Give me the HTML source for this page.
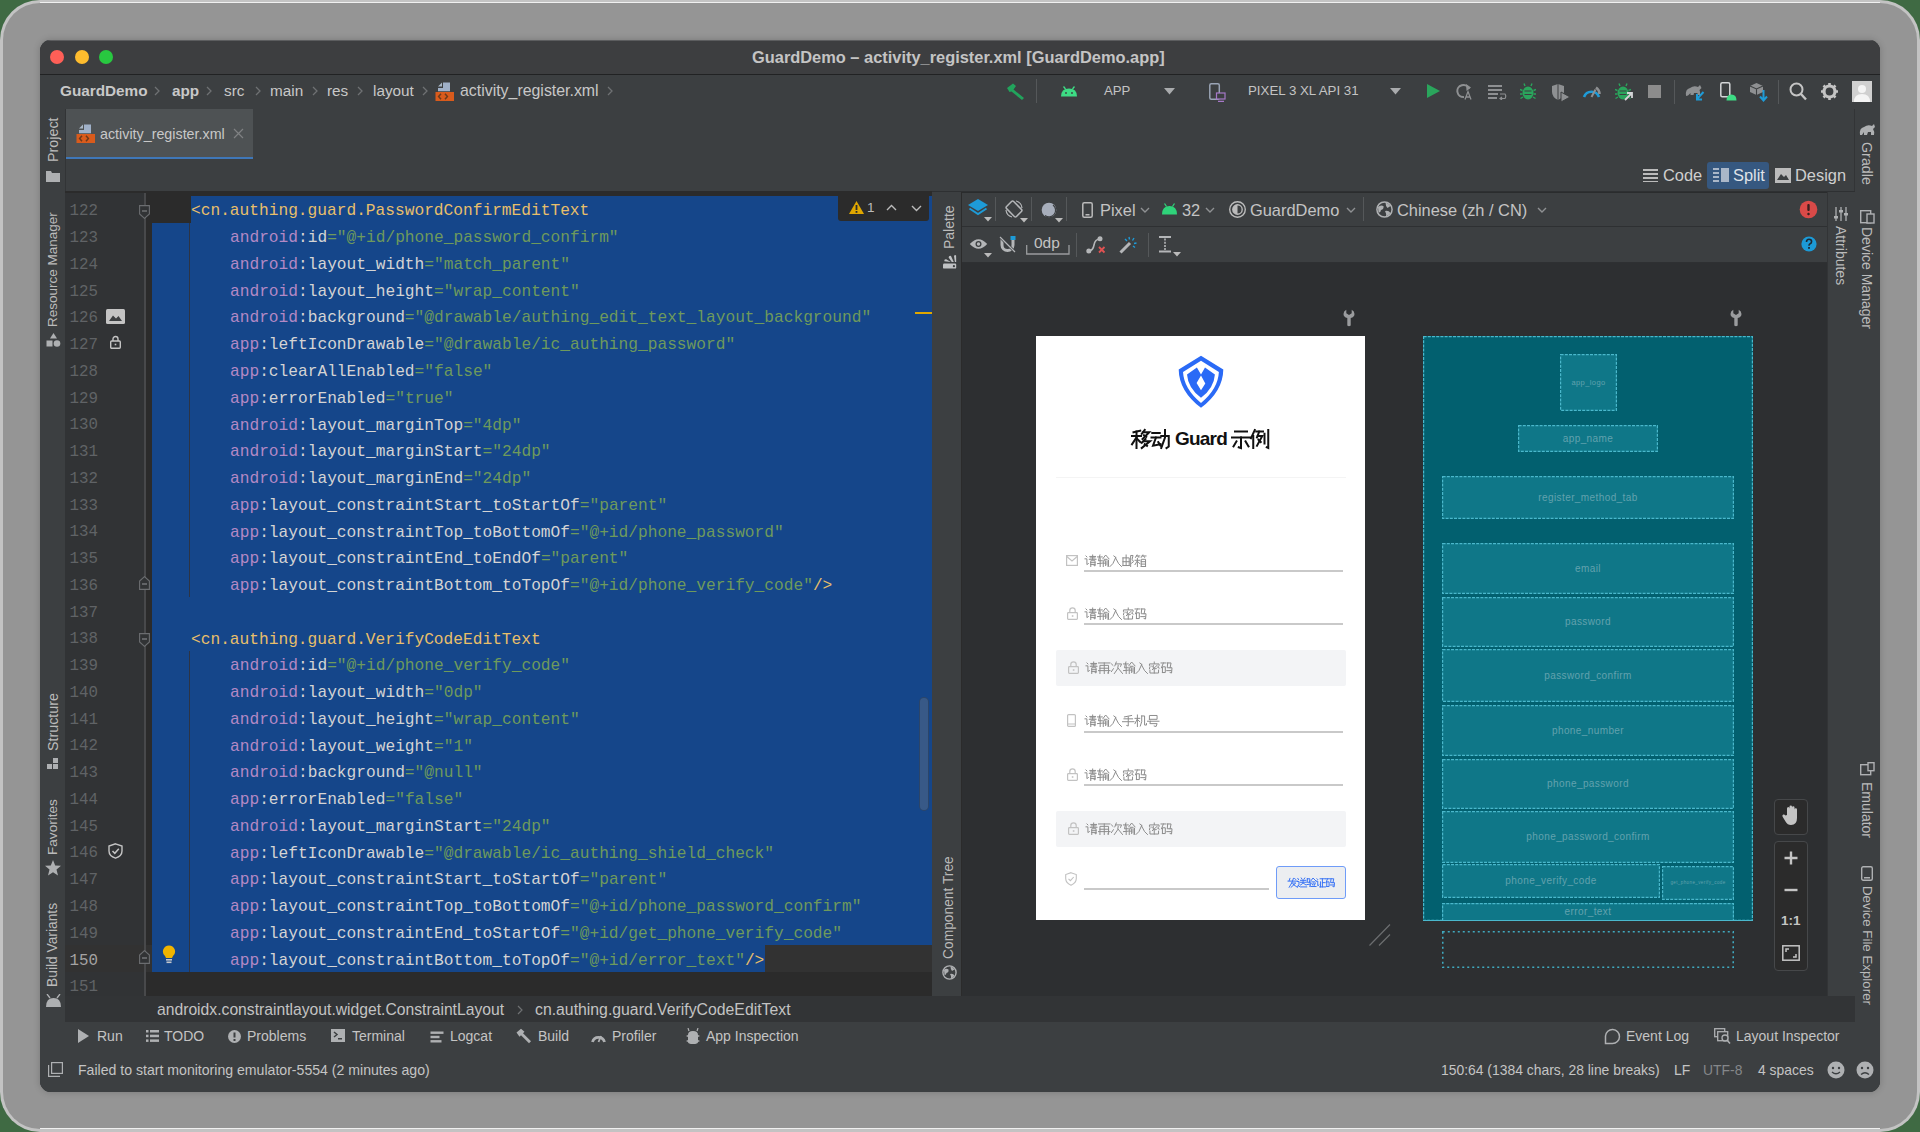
<!DOCTYPE html><html><head><meta charset="utf-8"><style>
*{box-sizing:border-box;margin:0;padding:0}
html,body{width:1920px;height:1132px;overflow:hidden}
body{background:#3f6a43;font-family:"Liberation Sans",sans-serif;position:relative}
.a{position:absolute}
.t{position:absolute;white-space:pre;line-height:0;height:0;font-family:"Liberation Sans",sans-serif}
.c{position:absolute;white-space:pre;line-height:0;height:0;font-family:"Liberation Mono",monospace;font-size:16.2px}
.vt{position:absolute;white-space:pre;line-height:0;height:0;transform-origin:0 0;transform:rotate(-90deg)}
.vt2{position:absolute;white-space:pre;line-height:0;height:0;transform-origin:0 0;transform:rotate(90deg)}
#clip{position:absolute;left:0;top:0;width:1920px;height:1132px;clip-path:inset(40px 40px 40px 40px round 11px)}
</style></head><body>
<div class="a" style="left:0px;top:0px;width:1920px;height:1132px;background:#c3c3c3;border-radius:40px"></div>
<div class="a" style="left:3px;top:3px;width:1914px;height:1126px;background:#959595;border-radius:37px"></div>
<div class="a" style="left:40px;top:2px;width:1840px;height:1px;background:#f0f0f0;"></div>
<div class="a" style="left:40px;top:1128px;width:1840px;height:1px;background:#f0f0f0;"></div>
<div class="a" style="left:40px;top:40px;width:1840px;height:1052px;background:#3c3f41;border-radius:11px;box-shadow:0 0 6px 1px rgba(0,0,0,0.15)"></div>
<div id="clip">
<div class="a" style="left:40px;top:40px;width:1840px;height:1052px;background:#3c3f41;"></div>
<div class="a" style="left:40px;top:40px;width:1840px;height:34px;background:#3d3e40;"></div>
<div class="a" style="left:40px;top:40px;width:1840px;height:1px;background:#5c5d5f;"></div>
<div class="a" style="left:40px;top:74px;width:1840px;height:1px;background:#212223;"></div>
<div class="a" style="left:50px;top:50px;width:14px;height:14px;background:#fe5f57;border-radius:50%"></div>
<div class="a" style="left:75px;top:50px;width:14px;height:14px;background:#febc2e;border-radius:50%"></div>
<div class="a" style="left:99px;top:50px;width:14px;height:14px;background:#28c840;border-radius:50%"></div>
<div class="t" style="left:752px;top:57px;font-size:16.4px;color:#c4c4c4;font-weight:bold">GuardDemo – activity_register.xml [GuardDemo.app]</div>
<div class="a" style="left:40px;top:75px;width:1840px;height:34px;background:#3c3f41;"></div>
<div class="t" style="left:60px;top:91px;font-size:15.3px;color:#c8c8c8;font-weight:bold">GuardDemo</div>
<div class="t" style="left:172px;top:91px;font-size:15.3px;color:#c8c8c8;font-weight:bold">app</div>
<div class="t" style="left:224px;top:91px;font-size:15.3px;color:#c8c8c8;">src</div>
<div class="t" style="left:270px;top:91px;font-size:15.3px;color:#c8c8c8;">main</div>
<div class="t" style="left:327px;top:91px;font-size:15.3px;color:#c8c8c8;">res</div>
<div class="t" style="left:373px;top:91px;font-size:15.3px;color:#c8c8c8;">layout</div>
<div class="t" style="left:460px;top:91px;font-size:15.9px;color:#c8c8c8;">activity_register.xml</div>
<svg class="a" style="left:154px;top:86px;" width="7" height="11" viewBox="0 0 7 11"><path d="M1 1 L5 5 L1 9" stroke="#6f7173" stroke-width="1.3" fill="none"/></svg>
<svg class="a" style="left:206px;top:86px;" width="7" height="11" viewBox="0 0 7 11"><path d="M1 1 L5 5 L1 9" stroke="#6f7173" stroke-width="1.3" fill="none"/></svg>
<svg class="a" style="left:255px;top:86px;" width="7" height="11" viewBox="0 0 7 11"><path d="M1 1 L5 5 L1 9" stroke="#6f7173" stroke-width="1.3" fill="none"/></svg>
<svg class="a" style="left:312px;top:86px;" width="7" height="11" viewBox="0 0 7 11"><path d="M1 1 L5 5 L1 9" stroke="#6f7173" stroke-width="1.3" fill="none"/></svg>
<svg class="a" style="left:357px;top:86px;" width="7" height="11" viewBox="0 0 7 11"><path d="M1 1 L5 5 L1 9" stroke="#6f7173" stroke-width="1.3" fill="none"/></svg>
<svg class="a" style="left:422px;top:86px;" width="7" height="11" viewBox="0 0 7 11"><path d="M1 1 L5 5 L1 9" stroke="#6f7173" stroke-width="1.3" fill="none"/></svg>
<svg class="a" style="left:607px;top:86px;" width="7" height="11" viewBox="0 0 7 11"><path d="M1 1 L5 5 L1 9" stroke="#6f7173" stroke-width="1.3" fill="none"/></svg>
<svg class="a" style="left:434px;top:81px;" width="22" height="21" viewBox="0 0 22 21"><path d="M4 5.5 L8 1.5 L8 5.5 Z" fill="#a9b7c6"/><path d="M9 1.5 L16 1.5 L16 10.3 L4 10.3 L4 7 L9 7 Z" fill="#9fb0c8"/><rect x="1.5" y="11" width="18.5" height="9" fill="#d95b1c"/><path d="M7 12.8 L4.6 15.5 L7 18.2 M11 12.8 L13.4 15.5 L11 18.2" stroke="#6b3a1c" stroke-width="1.5" fill="none"/></svg>
<div class="a" style="left:65px;top:109px;width:1790px;height:51px;background:#3c3f41;"></div>
<div class="a" style="left:66px;top:109px;width:187px;height:50px;background:#4e5254;"></div>
<div class="a" style="left:66px;top:157px;width:187px;height:2px;background:#3f77b8;"></div>
<svg class="a" style="left:75px;top:123px;" width="22" height="21" viewBox="0 0 22 21"><path d="M4 5.5 L8 1.5 L8 5.5 Z" fill="#a9b7c6"/><path d="M9 1.5 L16 1.5 L16 10.3 L4 10.3 L4 7 L9 7 Z" fill="#9fb0c8"/><rect x="1.5" y="11" width="18.5" height="9" fill="#d95b1c"/><path d="M7 12.8 L4.6 15.5 L7 18.2 M11 12.8 L13.4 15.5 L11 18.2" stroke="#6b3a1c" stroke-width="1.5" fill="none"/></svg>
<div class="t" style="left:100px;top:134px;font-size:14.3px;color:#c8c8c8;">activity_register.xml</div>
<svg class="a" style="left:233px;top:128px;" width="11" height="11" viewBox="0 0 11 11"><path d="M1 1 L10 10 M10 1 L1 10" stroke="#7f8183" stroke-width="1.2"/></svg>
<div class="a" style="left:65px;top:160px;width:1762px;height:31px;background:#3c3f41;"></div>
<div class="a" style="left:1707px;top:162px;width:62px;height:27px;background:#365880;border-radius:3px"></div>
<svg class="a" style="left:1643px;top:168px;" width="15" height="14" viewBox="0 0 15 14"><rect x="0" y="1" width="15" height="2" fill="#bbbbbb"/><rect x="0" y="5" width="15" height="2" fill="#bbbbbb"/><rect x="0" y="9" width="15" height="2" fill="#bbbbbb"/><rect x="0" y="13" width="15" height="1.5" fill="#bbbbbb"/></svg>
<div class="t" style="left:1663px;top:175px;font-size:16.4px;color:#cfcfcf;">Code</div>
<svg class="a" style="left:1713px;top:168px;" width="16" height="14" viewBox="0 0 16 14"><rect x="0" y="0" width="6" height="2" fill="#aab7c8"/><rect x="0" y="4" width="6" height="2" fill="#aab7c8"/><rect x="0" y="8" width="6" height="2" fill="#aab7c8"/><rect x="0" y="12" width="6" height="2" fill="#aab7c8"/><rect x="8" y="0" width="8" height="14" fill="#aab7c8"/></svg>
<div class="t" style="left:1733px;top:175px;font-size:16.4px;color:#dfe3e8;">Split</div>
<svg class="a" style="left:1775px;top:168px;" width="16" height="15" viewBox="0 0 16 15"><rect x="0" y="0" width="16" height="15" fill="#bbbbbb"/><path d="M2 12 L6 6 L9 9 L11 7 L14 12 Z" fill="#3c3f41"/></svg>
<div class="t" style="left:1795px;top:175px;font-size:16.4px;color:#cfcfcf;">Design</div>
<div class="a" style="left:40px;top:109px;width:25px;height:913px;background:#3c3f41;"></div>
<div class="a" style="left:65px;top:109px;width:1px;height:887px;background:#323436;"></div>
<div class="vt" style="left:53px;top:162px;font-size:14.3px;color:#bbbbbb">Project</div>
<svg class="a" style="left:46px;top:170px;" width="14" height="12" viewBox="0 0 14 12"><path d="M0 1 L5 1 L6 3 L14 3 L14 12 L0 12 Z" fill="#aeb0b2"/></svg>
<div class="vt" style="left:53px;top:327px;font-size:13.5px;color:#bbbbbb">Resource Manager</div>
<svg class="a" style="left:46px;top:333px;" width="15" height="15" viewBox="0 0 15 15"><path d="M7.5 0 L11 5.5 L4 5.5 Z" fill="#aeb0b2"/><rect x="0.5" y="7.5" width="6" height="6" fill="#aeb0b2"/><circle cx="11" cy="10.5" r="3.3" fill="#aeb0b2"/></svg>
<div class="vt" style="left:53px;top:751px;font-size:14.3px;color:#bbbbbb">Structure</div>
<svg class="a" style="left:47px;top:758px;" width="12" height="12" viewBox="0 0 12 12"><rect x="0" y="6" width="5" height="5" fill="#aeb0b2"/><rect x="6" y="6" width="5" height="5" fill="#aeb0b2"/><rect x="6" y="0" width="5" height="5" fill="#aeb0b2"/></svg>
<div class="vt" style="left:53px;top:855px;font-size:13.6px;color:#bbbbbb">Favorites</div>
<svg class="a" style="left:45px;top:860px;" width="16" height="16" viewBox="0 0 16 16"><path d="M8 0 L10.2 5.4 L16 5.8 L11.5 9.5 L13 15.5 L8 12.3 L3 15.5 L4.5 9.5 L0 5.8 L5.8 5.4 Z" fill="#aeb0b2"/></svg>
<div class="vt" style="left:53px;top:987px;font-size:13.8px;color:#bbbbbb">Build Variants</div>
<svg class="a" style="left:46px;top:994px;" width="15" height="13" viewBox="0 0 15 13"><path d="M1 0 L4 4 M14 0 L11 4" stroke="#aeb0b2" stroke-width="1.3"/><path d="M0 13 Q0 4 7.5 4 Q15 4 15 13 Z" fill="#aeb0b2"/></svg>
<div class="a" style="left:1855px;top:109px;width:25px;height:913px;background:#3c3f41;"></div>
<div class="a" style="left:1854px;top:109px;width:1px;height:913px;background:#323436;"></div>
<svg class="a" style="left:1859px;top:123px;" width="17" height="13" viewBox="0 0 17 13"><path d="M1 12 Q0 5 5 4 Q9 1 13 3 L15 1 L16 4 L14 6 Q16 9 15 12 L12 12 L12 9 L9 9 L8 12 L5 12 L5 9 L3 12 Z" fill="#aeb0b2"/></svg>
<div class="vt2" style="left:1867px;top:142px;font-size:14.3px;color:#bbbbbb">Gradle</div>
<svg class="a" style="left:1860px;top:210px;" width="15" height="14" viewBox="0 0 15 14"><rect x="0.7" y="0.7" width="10" height="12" fill="none" stroke="#aeb0b2" stroke-width="1.4"/><rect x="7" y="4" width="7" height="9" fill="#3c3f41" stroke="#aeb0b2" stroke-width="1.4"/></svg>
<div class="vt2" style="left:1867px;top:227px;font-size:14.0px;color:#bbbbbb">Device Manager</div>
<svg class="a" style="left:1860px;top:762px;" width="15" height="14" viewBox="0 0 15 14"><rect x="0.7" y="2.7" width="10" height="10" fill="none" stroke="#aeb0b2" stroke-width="1.4"/><rect x="8" y="0.7" width="6" height="8" fill="#3c3f41" stroke="#aeb0b2" stroke-width="1.4"/></svg>
<div class="vt2" style="left:1867px;top:782px;font-size:14.0px;color:#bbbbbb">Emulator</div>
<svg class="a" style="left:1861px;top:866px;" width="12" height="15" viewBox="0 0 12 15"><rect x="0.7" y="0.7" width="10.6" height="13.6" rx="1.5" fill="none" stroke="#aeb0b2" stroke-width="1.4"/><rect x="3" y="11" width="6" height="1.5" fill="#aeb0b2"/></svg>
<div class="vt2" style="left:1867px;top:886px;font-size:13.3px;color:#bbbbbb">Device File Explorer</div>
<div class="a" style="left:932px;top:192px;width:30px;height:804px;background:#3c3f41;"></div>
<div class="vt" style="left:949px;top:249px;font-size:14.0px;color:#bbbbbb">Palette</div>
<svg class="a" style="left:936px;top:248px;" width="26" height="26" viewBox="0 0 26 26"><rect x="7" y="15.6" width="13.2" height="5" rx="1.2" fill="#c0c2c4"/><circle cx="17.9" cy="18.2" r="1.1" fill="#3c3f41"/><path d="M8.3 13.3 Q8 10.8 10.2 11.2 L14.8 14 Z M12.6 9.6 Q12.8 7.3 15 7.9 L17.8 14 L15.8 14 Z M18 8 Q18.8 6.6 20.1 7.4 L20.2 14 L18.9 14 Z" fill="#c0c2c4"/></svg>
<div class="vt" style="left:949px;top:959px;font-size:13.8px;color:#bbbbbb">Component Tree</div>
<svg class="a" style="left:942px;top:965px;" width="15" height="15" viewBox="0 0 15 15"><circle cx="7.5" cy="7.5" r="6.6" fill="none" stroke="#aeb0b2" stroke-width="1.4"/><path d="M2 5 Q4 3 6.5 4.5 Q7 7.5 4.5 8 Q4 10.5 2.5 10 Z M8.5 1.5 Q11 2 12.5 4.5 L10 6 Q8.5 4 8.5 1.5 Z M8 9 Q11 8 12.5 10.5 Q11 13 9 13.2 Q9.5 11 8 9 Z" fill="#aeb0b2"/></svg>
<div class="a" style="left:1827px;top:192px;width:28px;height:804px;background:#3c3f41;"></div>
<div class="a" style="left:932px;top:191px;width:923px;height:1px;background:#2e3032;"></div>
<div class="a" style="left:1827px;top:192px;width:1px;height:804px;background:#323436;"></div>
<svg class="a" style="left:1834px;top:207px;" width="14" height="14" viewBox="0 0 14 14"><path d="M2 0 L2 14 M7 0 L7 14 M12 0 L12 14" stroke="#aeb0b2" stroke-width="1.3"/><rect x="0" y="9" width="4" height="2.5" fill="#aeb0b2"/><rect x="5" y="3" width="4" height="2.5" fill="#aeb0b2"/><rect x="10" y="6" width="4" height="2.5" fill="#aeb0b2"/></svg>
<div class="vt2" style="left:1841px;top:226px;font-size:14.0px;color:#bbbbbb">Attributes</div>
<div class="a" style="left:65px;top:996px;width:1790px;height:27px;background:#323436;"></div>
<div class="t" style="left:157px;top:1010px;font-size:15.7px;color:#c3c3c3;">androidx.constraintlayout.widget.ConstraintLayout</div>
<svg class="a" style="left:517px;top:1005px;" width="6" height="10" viewBox="0 0 6 10"><path d="M1 1 L5 5 L1 9" stroke="#6f7173" stroke-width="1.2" fill="none"/></svg>
<div class="t" style="left:535px;top:1010px;font-size:15.8px;color:#c3c3c3;">cn.authing.guard.VerifyCodeEditText</div>
<div class="a" style="left:40px;top:1022px;width:1840px;height:28px;background:#3c3f41;"></div>
<div class="t" style="left:97px;top:1036px;font-size:14.0px;color:#c4c4c4;">Run</div>
<div class="t" style="left:164px;top:1036px;font-size:14.0px;color:#c4c4c4;">TODO</div>
<div class="t" style="left:247px;top:1036px;font-size:14.0px;color:#c4c4c4;">Problems</div>
<div class="t" style="left:352px;top:1036px;font-size:14.0px;color:#c4c4c4;">Terminal</div>
<div class="t" style="left:450px;top:1036px;font-size:14.0px;color:#c4c4c4;">Logcat</div>
<div class="t" style="left:538px;top:1036px;font-size:14.0px;color:#c4c4c4;">Build</div>
<div class="t" style="left:612px;top:1036px;font-size:14.0px;color:#c4c4c4;">Profiler</div>
<div class="t" style="left:706px;top:1036px;font-size:14.0px;color:#c4c4c4;">App Inspection</div>
<div class="t" style="left:1626px;top:1036px;font-size:14.0px;color:#c4c4c4;">Event Log</div>
<div class="t" style="left:1736px;top:1036px;font-size:14.0px;color:#c4c4c4;">Layout Inspector</div>
<svg class="a" style="left:78px;top:1029px;" width="11" height="14" viewBox="0 0 11 14"><path d="M0 0 L11 7 L0 14 Z" fill="#aeb0b2"/></svg>
<svg class="a" style="left:146px;top:1030px;" width="13" height="12" viewBox="0 0 13 12"><rect x="0" y="0" width="2.5" height="2.5" fill="#aeb0b2"/><rect x="4" y="0" width="9" height="2.5" fill="#aeb0b2"/><rect x="0" y="4.7" width="2.5" height="2.5" fill="#aeb0b2"/><rect x="4" y="4.7" width="9" height="2.5" fill="#aeb0b2"/><rect x="0" y="9.4" width="2.5" height="2.5" fill="#aeb0b2"/><rect x="4" y="9.4" width="9" height="2.5" fill="#aeb0b2"/></svg>
<svg class="a" style="left:228px;top:1030px;" width="13" height="13" viewBox="0 0 13 13"><circle cx="6.5" cy="6.5" r="6.5" fill="#aeb0b2"/><rect x="5.5" y="2.5" width="2" height="5" fill="#3c3f41"/><rect x="5.5" y="9" width="2" height="2" fill="#3c3f41"/></svg>
<svg class="a" style="left:331px;top:1029px;" width="14" height="13" viewBox="0 0 14 13"><rect x="0" y="0" width="14" height="13" fill="#aeb0b2"/><path d="M3 3 L6 5.5 L3 8" stroke="#3c3f41" stroke-width="1.5" fill="none"/><rect x="7" y="9" width="4" height="1.5" fill="#3c3f41"/></svg>
<svg class="a" style="left:430px;top:1031px;" width="14" height="12" viewBox="0 0 14 12"><rect x="0.5" y="0.5" width="13" height="2.4" fill="#aeb0b2"/><rect x="0.5" y="4.8" width="9" height="2.4" fill="#aeb0b2"/><rect x="0.5" y="9.1" width="11" height="2.4" fill="#aeb0b2"/></svg>
<svg class="a" style="left:516px;top:1028px;" width="16" height="16" viewBox="0 0 16 16"><path d="M0.5 4.5 L5 0.8 L8.5 3.8 L7 5.3 L15 13.3 L13 15.3 L5 7.3 L3.5 8.8 Z" fill="#aeb0b2"/></svg>
<svg class="a" style="left:591px;top:1030px;" width="15" height="13" viewBox="0 0 15 13"><path d="M1.5 12 A6.2 6.2 0 0 1 13.5 12" stroke="#aeb0b2" stroke-width="2.8" fill="none"/><path d="M7.5 12 L10 6" stroke="#aeb0b2" stroke-width="1.8"/></svg>
<svg class="a" style="left:686px;top:1028px;" width="14" height="16" viewBox="0 0 14 16"><path d="M3 3 L2 0 M11 3 L12 0" stroke="#aeb0b2" stroke-width="1.2"/><path d="M2 7 Q2 3 7 3 Q12 3 12 7 L14 8 L12 9 L12 12 L14 13 L12 14 Q12 16 7 16 Q2 16 2 14 L0 13 L2 12 L2 9 L0 8 L2 7 Z" fill="#aeb0b2"/></svg>
<svg class="a" style="left:1604px;top:1028px;" width="17" height="17" viewBox="0 0 17 17"><path d="M1.5 15.5 L1.5 8 A7 7 0 1 1 8.5 15.5 Z" stroke="#aeb0b2" stroke-width="1.5" fill="none"/></svg>
<svg class="a" style="left:1714px;top:1028px;" width="17" height="17" viewBox="0 0 17 17"><rect x="0.7" y="0.7" width="10" height="8" fill="none" stroke="#aeb0b2" stroke-width="1.3"/><rect x="3.7" y="3.7" width="10" height="9" fill="#3c3f41" stroke="#aeb0b2" stroke-width="1.3"/><circle cx="11" cy="10" r="3" fill="#3c3f41" stroke="#aeb0b2" stroke-width="1.3"/><path d="M13 12 L16 15.5" stroke="#aeb0b2" stroke-width="1.5"/></svg>
<div class="a" style="left:40px;top:1050px;width:1840px;height:42px;background:#3c3f41;"></div>
<svg class="a" style="left:48px;top:1062px;" width="15" height="15" viewBox="0 0 15 15"><rect x="3.6" y="0.6" width="10.8" height="10.8" fill="none" stroke="#aeb0b2" stroke-width="1.2"/><path d="M0.6 3 L0.6 14.4 L12 14.4" stroke="#aeb0b2" stroke-width="1.2" fill="none"/></svg>
<div class="t" style="left:78px;top:1070px;font-size:14.1px;color:#c4c4c4;">Failed to start monitoring emulator-5554 (2 minutes ago)</div>
<div class="t" style="left:1441px;top:1070px;font-size:13.9px;color:#c4c4c4;">150:64 (1384 chars, 28 line breaks)</div>
<div class="t" style="left:1674px;top:1070px;font-size:13.9px;color:#c4c4c4;">LF</div>
<div class="t" style="left:1703px;top:1070px;font-size:13.9px;color:#85878a;">UTF-8</div>
<div class="t" style="left:1758px;top:1070px;font-size:13.9px;color:#c4c4c4;">4 spaces</div>
<svg class="a" style="left:1827px;top:1061px;" width="18" height="18" viewBox="0 0 18 18"><circle cx="9" cy="9" r="8.5" fill="#aeb0b2"/><circle cx="6" cy="7" r="1.2" fill="#3c3f41"/><circle cx="12" cy="7" r="1.2" fill="#3c3f41"/><path d="M5 11 Q9 14.5 13 11" stroke="#3c3f41" stroke-width="1.4" fill="none"/></svg>
<svg class="a" style="left:1856px;top:1061px;" width="18" height="18" viewBox="0 0 18 18"><circle cx="9" cy="9" r="8.5" fill="#aeb0b2"/><circle cx="6" cy="7" r="1.2" fill="#3c3f41"/><circle cx="12" cy="7" r="1.2" fill="#3c3f41"/><path d="M5 13.5 Q9 10 13 13.5" stroke="#3c3f41" stroke-width="1.4" fill="none"/></svg>
<div class="a" style="left:65px;top:191px;width:867px;height:2px;background:#2b2b2b;"></div>
<div class="a" style="left:65px;top:193px;width:80px;height:803px;background:#313335;"></div>
<div class="a" style="left:145px;top:193px;width:787px;height:803px;background:#2b2b2b;"></div>
<div class="a" style="left:65px;top:945.2800000000001px;width:867px;height:26.76px;background:#323232;"></div>
<div class="a" style="left:191px;top:196.0px;width:741px;height:27.26px;background:#15468a;"></div>
<div class="a" style="left:152px;top:222.76px;width:780px;height:722.5200000000001px;background:#15468a;"></div>
<div class="a" style="left:152px;top:945.2800000000001px;width:613px;height:26.76px;background:#15468a;"></div>
<div class="a" style="left:189px;top:222.76px;width:1px;height:374.6400000000001px;background:#2d3444;"></div>
<div class="a" style="left:189px;top:650.9200000000001px;width:1px;height:321.12px;background:#2d3444;"></div>
<div class="a" style="left:144px;top:193px;width:2px;height:803px;background:#48494b;"></div>
<svg class="a" style="left:139px;top:204.5px;" width="11" height="14" viewBox="0 0 11 14"><path d="M0.6 0.6 L10.4 0.6 L10.4 9 L5.5 13.4 L0.6 9 Z" fill="#313335" stroke="#6b6d70" stroke-width="1.1"/><path d="M3 6 L8 6" stroke="#8b8d90" stroke-width="1.1"/></svg>
<svg class="a" style="left:139px;top:575.6400000000001px;" width="11" height="14" viewBox="0 0 11 14"><path d="M0.6 13.4 L10.4 13.4 L10.4 5 L5.5 0.6 L0.6 5 Z" fill="#313335" stroke="#6b6d70" stroke-width="1.1"/><path d="M3 8 L8 8" stroke="#8b8d90" stroke-width="1.1"/></svg>
<svg class="a" style="left:139px;top:632.6600000000001px;" width="11" height="14" viewBox="0 0 11 14"><path d="M0.6 0.6 L10.4 0.6 L10.4 9 L5.5 13.4 L0.6 9 Z" fill="#313335" stroke="#6b6d70" stroke-width="1.1"/><path d="M3 6 L8 6" stroke="#8b8d90" stroke-width="1.1"/></svg>
<svg class="a" style="left:139px;top:950.2800000000001px;" width="11" height="14" viewBox="0 0 11 14"><path d="M0.6 13.4 L10.4 13.4 L10.4 5 L5.5 0.6 L0.6 5 Z" fill="#313335" stroke="#6b6d70" stroke-width="1.1"/><path d="M3 8 L8 8" stroke="#8b8d90" stroke-width="1.1"/></svg>
<div class="c" style="left:68px;top:211.2px;width:30px;text-align:right;color:#606366;font-size:15.8px">122</div>
<div class="c" style="left:68px;top:237.9px;width:30px;text-align:right;color:#606366;font-size:15.8px">123</div>
<div class="c" style="left:68px;top:264.7px;width:30px;text-align:right;color:#606366;font-size:15.8px">124</div>
<div class="c" style="left:68px;top:291.5px;width:30px;text-align:right;color:#606366;font-size:15.8px">125</div>
<div class="c" style="left:68px;top:318.2px;width:30px;text-align:right;color:#606366;font-size:15.8px">126</div>
<div class="c" style="left:68px;top:345.0px;width:30px;text-align:right;color:#606366;font-size:15.8px">127</div>
<div class="c" style="left:68px;top:371.7px;width:30px;text-align:right;color:#606366;font-size:15.8px">128</div>
<div class="c" style="left:68px;top:398.5px;width:30px;text-align:right;color:#606366;font-size:15.8px">129</div>
<div class="c" style="left:68px;top:425.3px;width:30px;text-align:right;color:#606366;font-size:15.8px">130</div>
<div class="c" style="left:68px;top:452.0px;width:30px;text-align:right;color:#606366;font-size:15.8px">131</div>
<div class="c" style="left:68px;top:478.8px;width:30px;text-align:right;color:#606366;font-size:15.8px">132</div>
<div class="c" style="left:68px;top:505.5px;width:30px;text-align:right;color:#606366;font-size:15.8px">133</div>
<div class="c" style="left:68px;top:532.3px;width:30px;text-align:right;color:#606366;font-size:15.8px">134</div>
<div class="c" style="left:68px;top:559.1px;width:30px;text-align:right;color:#606366;font-size:15.8px">135</div>
<div class="c" style="left:68px;top:585.8px;width:30px;text-align:right;color:#606366;font-size:15.8px">136</div>
<div class="c" style="left:68px;top:612.6px;width:30px;text-align:right;color:#606366;font-size:15.8px">137</div>
<div class="c" style="left:68px;top:639.3px;width:30px;text-align:right;color:#606366;font-size:15.8px">138</div>
<div class="c" style="left:68px;top:666.1px;width:30px;text-align:right;color:#606366;font-size:15.8px">139</div>
<div class="c" style="left:68px;top:692.9px;width:30px;text-align:right;color:#606366;font-size:15.8px">140</div>
<div class="c" style="left:68px;top:719.6px;width:30px;text-align:right;color:#606366;font-size:15.8px">141</div>
<div class="c" style="left:68px;top:746.4px;width:30px;text-align:right;color:#606366;font-size:15.8px">142</div>
<div class="c" style="left:68px;top:773.1px;width:30px;text-align:right;color:#606366;font-size:15.8px">143</div>
<div class="c" style="left:68px;top:799.9px;width:30px;text-align:right;color:#606366;font-size:15.8px">144</div>
<div class="c" style="left:68px;top:826.7px;width:30px;text-align:right;color:#606366;font-size:15.8px">145</div>
<div class="c" style="left:68px;top:853.4px;width:30px;text-align:right;color:#606366;font-size:15.8px">146</div>
<div class="c" style="left:68px;top:880.2px;width:30px;text-align:right;color:#606366;font-size:15.8px">147</div>
<div class="c" style="left:68px;top:906.9px;width:30px;text-align:right;color:#606366;font-size:15.8px">148</div>
<div class="c" style="left:68px;top:933.7px;width:30px;text-align:right;color:#606366;font-size:15.8px">149</div>
<div class="c" style="left:68px;top:960.5px;width:30px;text-align:right;color:#a4a3a3;font-size:15.8px">150</div>
<div class="c" style="left:68px;top:987.2px;width:30px;text-align:right;color:#606366;font-size:15.8px">151</div>
<div class="c" style="left:191px;top:211.4px"><span style="color:#e8bf6a">&lt;cn.authing.guard.PasswordConfirmEditText</span></div>
<div class="c" style="left:230px;top:238.1px"><span style="color:#b389c5">android</span><span style="color:#d4d4d4">:id</span><span style="color:#6e9a5c">="@+id/phone_password_confirm"</span></div>
<div class="c" style="left:230px;top:264.9px"><span style="color:#b389c5">android</span><span style="color:#d4d4d4">:layout_width</span><span style="color:#6e9a5c">="match_parent"</span></div>
<div class="c" style="left:230px;top:291.7px"><span style="color:#b389c5">android</span><span style="color:#d4d4d4">:layout_height</span><span style="color:#6e9a5c">="wrap_content"</span></div>
<div class="c" style="left:230px;top:318.4px"><span style="color:#b389c5">android</span><span style="color:#d4d4d4">:background</span><span style="color:#6e9a5c">="@drawable/authing_edit_text_layout_background"</span></div>
<div class="c" style="left:230px;top:345.2px"><span style="color:#b389c5">app</span><span style="color:#d4d4d4">:leftIconDrawable</span><span style="color:#6e9a5c">="@drawable/ic_authing_password"</span></div>
<div class="c" style="left:230px;top:371.9px"><span style="color:#b389c5">app</span><span style="color:#d4d4d4">:clearAllEnabled</span><span style="color:#6e9a5c">="false"</span></div>
<div class="c" style="left:230px;top:398.7px"><span style="color:#b389c5">app</span><span style="color:#d4d4d4">:errorEnabled</span><span style="color:#6e9a5c">="true"</span></div>
<div class="c" style="left:230px;top:425.5px"><span style="color:#b389c5">android</span><span style="color:#d4d4d4">:layout_marginTop</span><span style="color:#6e9a5c">="4dp"</span></div>
<div class="c" style="left:230px;top:452.2px"><span style="color:#b389c5">android</span><span style="color:#d4d4d4">:layout_marginStart</span><span style="color:#6e9a5c">="24dp"</span></div>
<div class="c" style="left:230px;top:479.0px"><span style="color:#b389c5">android</span><span style="color:#d4d4d4">:layout_marginEnd</span><span style="color:#6e9a5c">="24dp"</span></div>
<div class="c" style="left:230px;top:505.7px"><span style="color:#b389c5">app</span><span style="color:#d4d4d4">:layout_constraintStart_toStartOf</span><span style="color:#6e9a5c">="parent"</span></div>
<div class="c" style="left:230px;top:532.5px"><span style="color:#b389c5">app</span><span style="color:#d4d4d4">:layout_constraintTop_toBottomOf</span><span style="color:#6e9a5c">="@+id/phone_password"</span></div>
<div class="c" style="left:230px;top:559.3px"><span style="color:#b389c5">app</span><span style="color:#d4d4d4">:layout_constraintEnd_toEndOf</span><span style="color:#6e9a5c">="parent"</span></div>
<div class="c" style="left:230px;top:586.0px"><span style="color:#b389c5">app</span><span style="color:#d4d4d4">:layout_constraintBottom_toTopOf</span><span style="color:#6e9a5c">="@+id/phone_verify_code"</span><span style="color:#e8bf6a">/&gt;</span></div>
<div class="c" style="left:191px;top:639.5px"><span style="color:#e8bf6a">&lt;cn.authing.guard.VerifyCodeEditText</span></div>
<div class="c" style="left:230px;top:666.3px"><span style="color:#b389c5">android</span><span style="color:#d4d4d4">:id</span><span style="color:#6e9a5c">="@+id/phone_verify_code"</span></div>
<div class="c" style="left:230px;top:693.1px"><span style="color:#b389c5">android</span><span style="color:#d4d4d4">:layout_width</span><span style="color:#6e9a5c">="0dp"</span></div>
<div class="c" style="left:230px;top:719.8px"><span style="color:#b389c5">android</span><span style="color:#d4d4d4">:layout_height</span><span style="color:#6e9a5c">="wrap_content"</span></div>
<div class="c" style="left:230px;top:746.6px"><span style="color:#b389c5">android</span><span style="color:#d4d4d4">:layout_weight</span><span style="color:#6e9a5c">="1"</span></div>
<div class="c" style="left:230px;top:773.3px"><span style="color:#b389c5">android</span><span style="color:#d4d4d4">:background</span><span style="color:#6e9a5c">="@null"</span></div>
<div class="c" style="left:230px;top:800.1px"><span style="color:#b389c5">app</span><span style="color:#d4d4d4">:errorEnabled</span><span style="color:#6e9a5c">="false"</span></div>
<div class="c" style="left:230px;top:826.9px"><span style="color:#b389c5">android</span><span style="color:#d4d4d4">:layout_marginStart</span><span style="color:#6e9a5c">="24dp"</span></div>
<div class="c" style="left:230px;top:853.6px"><span style="color:#b389c5">app</span><span style="color:#d4d4d4">:leftIconDrawable</span><span style="color:#6e9a5c">="@drawable/ic_authing_shield_check"</span></div>
<div class="c" style="left:230px;top:880.4px"><span style="color:#b389c5">app</span><span style="color:#d4d4d4">:layout_constraintStart_toStartOf</span><span style="color:#6e9a5c">="parent"</span></div>
<div class="c" style="left:230px;top:907.1px"><span style="color:#b389c5">app</span><span style="color:#d4d4d4">:layout_constraintTop_toBottomOf</span><span style="color:#6e9a5c">="@+id/phone_password_confirm"</span></div>
<div class="c" style="left:230px;top:933.9px"><span style="color:#b389c5">app</span><span style="color:#d4d4d4">:layout_constraintEnd_toStartOf</span><span style="color:#6e9a5c">="@+id/get_phone_verify_code"</span></div>
<div class="c" style="left:230px;top:960.7px"><span style="color:#b389c5">app</span><span style="color:#d4d4d4">:layout_constraintBottom_toTopOf</span><span style="color:#6e9a5c">="@+id/error_text"</span><span style="color:#e8bf6a">/&gt;</span></div>
<svg class="a" style="left:106px;top:309px;" width="19" height="15" viewBox="0 0 19 15"><rect x="0" y="0" width="19" height="15" rx="1.5" fill="#c4c4c4"/><path d="M3 12 L7 6.5 L10 9.5 L12.5 7 L16 12 Z" fill="#3c3f41"/></svg>
<svg class="a" style="left:110px;top:335px;" width="11" height="14" viewBox="0 0 11 14"><path d="M3 6 L3 4 A2.5 2.5 0 0 1 8 4 L8 6" stroke="#c4c4c4" stroke-width="1.4" fill="none"/><rect x="0.7" y="6" width="9.6" height="7.3" rx="1" fill="none" stroke="#c4c4c4" stroke-width="1.4"/><rect x="4.7" y="8.7" width="1.6" height="1.6" fill="#c4c4c4"/></svg>
<svg class="a" style="left:108px;top:843px;" width="15" height="16" viewBox="0 0 15 16"><path d="M7.5 0.8 L14 3 L14 8 Q14 13 7.5 15.2 Q1 13 1 8 L1 3 Z" fill="none" stroke="#c4c4c4" stroke-width="1.4"/><path d="M4.5 8 L6.8 10.3 L10.8 5.8" stroke="#c4c4c4" stroke-width="1.5" fill="none"/></svg>
<svg class="a" style="left:162px;top:945px;" width="14" height="19" viewBox="0 0 14 19"><path d="M7 0.5 A6 6 0 0 1 11 11 L10 13 L4 13 L3 11 A6 6 0 0 1 7 0.5 Z" fill="#f0b400"/><rect x="4" y="14" width="6" height="1.6" fill="#c3c6cb"/><rect x="4.5" y="16.5" width="5" height="1.6" fill="#c3c6cb"/></svg>
<div class="a" style="left:838px;top:196px;width:91px;height:25px;background:#2b2b2b;border-radius:0 0 3px 3px"></div>
<svg class="a" style="left:849px;top:201px;" width="15" height="13" viewBox="0 0 15 13"><path d="M7.5 0 L15 13 L0 13 Z" fill="#e0a700"/><rect x="6.6" y="4" width="1.8" height="5" fill="#2b2b2b"/><rect x="6.6" y="10" width="1.8" height="1.8" fill="#2b2b2b"/></svg>
<div class="t" style="left:867px;top:208px;font-size:13.5px;color:#bbbbbb;">1</div>
<svg class="a" style="left:886px;top:204px;" width="11" height="7" viewBox="0 0 11 7"><path d="M1 6 L5.5 1.5 L10 6" stroke="#bbbbbb" stroke-width="1.4" fill="none"/></svg>
<svg class="a" style="left:911px;top:205px;" width="11" height="7" viewBox="0 0 11 7"><path d="M1 1 L5.5 5.5 L10 1" stroke="#bbbbbb" stroke-width="1.4" fill="none"/></svg>
<div class="a" style="left:915px;top:312px;width:17px;height:2px;background:#e0a700;"></div>
<div class="a" style="left:919px;top:697px;width:10px;height:114px;background:rgba(130,130,130,0.32);border:1px solid rgba(0,0,0,0.22);border-radius:5px"></div>
<div class="a" style="left:962px;top:192px;width:865px;height:804px;background:#2d2f31;"></div>
<div class="a" style="left:961px;top:192px;width:1px;height:804px;background:#2b2b2b;"></div>
<div class="a" style="left:962px;top:192px;width:865px;height:1px;background:#2a2c2d;"></div>
<div class="a" style="left:962px;top:193px;width:865px;height:33px;background:#3c3f41;"></div>
<div class="a" style="left:962px;top:226px;width:865px;height:1px;background:#2e3032;"></div>
<div class="a" style="left:962px;top:227px;width:865px;height:35px;background:#3c3f41;"></div>
<div class="a" style="left:962px;top:262px;width:865px;height:1px;background:#2e3032;"></div>
<svg class="a" style="left:1799px;top:200px;" width="19" height="19" viewBox="0 0 19 19"><circle cx="9.5" cy="9.5" r="8.8" fill="#d94a48"/><rect x="8.3" y="4" width="2.4" height="7" rx="1" fill="#3a1f1f"/><rect x="8.3" y="12.8" width="2.4" height="2.4" rx="1" fill="#3a1f1f"/></svg>
<svg class="a" style="left:1801px;top:236px;" width="16" height="16" viewBox="0 0 16 16"><circle cx="8" cy="8" r="7.6" fill="#1c9ad6"/><path d="M5.5 6 Q5.5 3.3 8 3.3 Q10.6 3.3 10.6 5.8 Q10.6 7.3 8.8 8 Q8 8.4 8 9.8" stroke="#1d2a35" stroke-width="1.6" fill="none"/><rect x="7.1" y="11" width="1.8" height="1.8" fill="#1d2a35"/></svg>
<svg class="a" style="left:968px;top:199px;" width="21" height="20" viewBox="0 0 21 20"><path d="M10 0 L20 6 L10 12 L0 6 Z" fill="#1e9bd7"/><path d="M1.5 9.5 L10 15 L18.5 9.5" stroke="#1e9bd7" stroke-width="2" fill="none"/></svg>
<svg class="a" style="left:984px;top:217px;" width="8" height="5" viewBox="0 0 8 5"><path d="M0 0 L8 0 L4 4.5 Z" fill="#bbbbbb"/></svg>
<div class="a" style="left:995px;top:197px;width:1px;height:24px;background:#55585a;"></div>
<div class="a" style="left:1031px;top:197px;width:1px;height:24px;background:#55585a;"></div>
<div class="a" style="left:1066px;top:197px;width:1px;height:24px;background:#55585a;"></div>
<div class="a" style="left:1363px;top:197px;width:1px;height:24px;background:#55585a;"></div>
<svg class="a" style="left:1004px;top:199px;" width="20" height="20" viewBox="0 0 20 20"><rect x="5" y="3" width="10" height="14" rx="1.5" transform="rotate(-45 10 10)" fill="none" stroke="#b4b6b8" stroke-width="1.5"/><path d="M2 11 A8 8 0 0 0 8 18 M18 9 A8 8 0 0 0 12 2" stroke="#b4b6b8" stroke-width="1.2" fill="none"/></svg>
<svg class="a" style="left:1020px;top:218px;" width="8" height="5" viewBox="0 0 8 5"><path d="M0 0 L8 0 L4 4.5 Z" fill="#bbbbbb"/></svg>
<svg class="a" style="left:1041px;top:202px;" width="16" height="16" viewBox="0 0 16 16"><circle cx="8" cy="8" r="7.3" fill="#a7aebb"/><path d="M12 3 A6.3 6.3 0 0 1 4 13.5" stroke="#3c3f41" stroke-width="1.2" fill="none"/></svg>
<svg class="a" style="left:1055px;top:218px;" width="8" height="5" viewBox="0 0 8 5"><path d="M0 0 L8 0 L4 4.5 Z" fill="#bbbbbb"/></svg>
<svg class="a" style="left:1082px;top:202px;" width="11" height="16" viewBox="0 0 11 16"><rect x="0.8" y="0.8" width="9.4" height="14.4" rx="1.5" fill="none" stroke="#bbbbbb" stroke-width="1.5"/><rect x="3.5" y="12" width="4" height="1.5" fill="#bbbbbb"/></svg>
<div class="t" style="left:1100px;top:210px;font-size:16.4px;color:#c4c4c4;">Pixel</div>
<svg class="a" style="left:1140px;top:207px;" width="10" height="6" viewBox="0 0 10 6"><path d="M1 1 L5 5 L9 1" stroke="#8f9193" stroke-width="1.4" fill="none"/></svg>
<svg class="a" style="left:1162px;top:203px;" width="15" height="12" viewBox="0 0 15 12"><path d="M2.5 0.5 L4.5 3.5 M12.5 0.5 L10.5 3.5" stroke="#2fd37a" stroke-width="1.3"/><path d="M0 11.5 Q0 3 7.5 3 Q15 3 15 11.5 Z" fill="#2fd37a"/></svg>
<div class="t" style="left:1182px;top:210px;font-size:16.4px;color:#c4c4c4;">32</div>
<svg class="a" style="left:1205px;top:207px;" width="10" height="6" viewBox="0 0 10 6"><path d="M1 1 L5 5 L9 1" stroke="#8f9193" stroke-width="1.4" fill="none"/></svg>
<svg class="a" style="left:1229px;top:201px;" width="17" height="17" viewBox="0 0 17 17"><circle cx="8.5" cy="8.5" r="7.8" fill="none" stroke="#bbbbbb" stroke-width="1.4"/><circle cx="8.5" cy="8.5" r="4.7" fill="none" stroke="#bbbbbb" stroke-width="1.4"/><path d="M8.5 3.8 A4.7 4.7 0 0 0 8.5 13.2 Z" fill="#bbbbbb"/></svg>
<div class="t" style="left:1250px;top:210px;font-size:16.4px;color:#c4c4c4;">GuardDemo</div>
<svg class="a" style="left:1346px;top:207px;" width="10" height="6" viewBox="0 0 10 6"><path d="M1 1 L5 5 L9 1" stroke="#8f9193" stroke-width="1.4" fill="none"/></svg>
<svg class="a" style="left:1376px;top:201px;" width="17" height="17" viewBox="0 0 17 17"><circle cx="8.5" cy="8.5" r="7.6" fill="none" stroke="#aeb0b2" stroke-width="1.5"/><path d="M2 6 Q4.5 3.5 7.5 5 Q8 8.5 5 9 Q4.5 12 2.5 11.5 Z M9.5 1.5 Q12.5 2 14.5 5 L11.5 7 Q9.5 5 9.5 1.5 Z M9 10 Q12.5 9 14.5 12 Q12.5 15 10 15.2 Q10.5 12.5 9 10 Z" fill="#aeb0b2"/></svg>
<div class="t" style="left:1397px;top:210px;font-size:16.4px;color:#c4c4c4;">Chinese (zh / CN)</div>
<svg class="a" style="left:1537px;top:207px;" width="10" height="6" viewBox="0 0 10 6"><path d="M1 1 L5 5 L9 1" stroke="#8f9193" stroke-width="1.4" fill="none"/></svg>
<svg class="a" style="left:969px;top:238px;" width="19" height="12" viewBox="0 0 19 12"><path d="M0.8 6 Q9.5 -3.5 18.2 6 Q9.5 15.5 0.8 6 Z" fill="#b4b6b8"/><circle cx="9.5" cy="6" r="3" fill="#3c3f41"/><circle cx="9.5" cy="6" r="1.7" fill="#b4b6b8"/></svg>
<svg class="a" style="left:984px;top:253px;" width="8" height="5" viewBox="0 0 8 5"><path d="M0 0 L8 0 L4 4.5 Z" fill="#bbbbbb"/></svg>
<svg class="a" style="left:999px;top:236px;" width="17" height="17" viewBox="0 0 17 17"><path d="M3 3 L3 9 A5.5 5.5 0 0 0 14 9 L14 3" stroke="#b4b6b8" stroke-width="3" fill="none"/><rect x="11.5" y="0" width="5" height="4" fill="#1e9bd7"/><path d="M1 1 L16 16" stroke="#3c3f41" stroke-width="2.5"/><path d="M1 1 L16 16" stroke="#b4b6b8" stroke-width="1.2"/></svg>
<div class="t" style="left:1034px;top:243px;font-size:15.5px;color:#c4c4c4;">0dp</div>
<svg class="a" style="left:1026px;top:245px;" width="44" height="10" viewBox="0 0 44 10"><path d="M0.7 0 L0.7 9 L43 9 L43 0" stroke="#9a9c9e" stroke-width="1.3" fill="none"/></svg>
<div class="a" style="left:1076px;top:233px;width:1px;height:24px;background:#55585a;"></div>
<div class="a" style="left:1148px;top:233px;width:1px;height:24px;background:#55585a;"></div>
<svg class="a" style="left:1086px;top:236px;" width="22" height="18" viewBox="0 0 22 18"><path d="M2.5 15 Q7 15 8 9 Q9 3 14 3" stroke="#b4b6b8" stroke-width="1.6" fill="none"/><circle cx="2.8" cy="15" r="2.5" fill="#b4b6b8"/><circle cx="14" cy="2.8" r="2.5" fill="#b4b6b8"/><path d="M13 11 L18.5 16.5 M18.5 11 L13 16.5" stroke="#e05252" stroke-width="1.8"/></svg>
<svg class="a" style="left:1119px;top:236px;" width="19" height="18" viewBox="0 0 19 18"><path d="M1.5 16.5 L11 7" stroke="#b4b6b8" stroke-width="3"/><path d="M10 1 L10.5 3.5 M15 2 L13.5 4.5 M17.5 7 L15 7.5 M16 11.5 L14 10 M6 3 L8 5" stroke="#1e9bd7" stroke-width="1.4"/></svg>
<svg class="a" style="left:1159px;top:236px;" width="13" height="17" viewBox="0 0 13 17"><rect x="0" y="0" width="12" height="2" fill="#b4b6b8"/><rect x="0" y="14.5" width="12" height="2" fill="#b4b6b8"/><path d="M6 2.5 L6 14" stroke="#b4b6b8" stroke-width="1.6" stroke-dasharray="2 1.2"/></svg>
<svg class="a" style="left:1173px;top:252px;" width="8" height="5" viewBox="0 0 8 5"><path d="M0 0 L8 0 L4 4.5 Z" fill="#bbbbbb"/></svg>
<svg class="a" style="left:1343px;top:309px;" width="12" height="18" viewBox="0 0 12 18"><path d="M3.3 0.8 Q0.5 2 0.5 5 Q0.5 8 4.3 9 L4.3 16.5 Q6 18 7.7 16.5 L7.7 9 Q11.5 8 11.5 5 Q11.5 2 8.7 0.8 L8.7 4.2 L6 6 L3.3 4.2 Z" fill="#9a9c9e"/></svg>
<svg class="a" style="left:1730px;top:309px;" width="12" height="18" viewBox="0 0 12 18"><path d="M3.3 0.8 Q0.5 2 0.5 5 Q0.5 8 4.3 9 L4.3 16.5 Q6 18 7.7 16.5 L7.7 9 Q11.5 8 11.5 5 Q11.5 2 8.7 0.8 L8.7 4.2 L6 6 L3.3 4.2 Z" fill="#9a9c9e"/></svg>
<svg class="a" style="left:1368px;top:922px;" width="24" height="26" viewBox="0 0 24 26"><path d="M1.5 23.5 L22 2.5 M11 23.5 L22 12.5" stroke="#6c6e70" stroke-width="1.2"/></svg>
<div class="a" style="left:1774px;top:799px;width:34px;height:36px;background:#2b2b2b;border:1px solid #46484a;border-radius:4px"></div>
<div class="a" style="left:1774px;top:841px;width:34px;height:130px;background:#2b2b2b;border:1px solid #46484a;border-radius:4px"></div>
<svg class="a" style="left:1781px;top:805px;" width="20" height="22" viewBox="0 0 20 22"><path d="M6 10 L6 3.5 Q6 2 7.3 2 Q8.5 2 8.5 3.5 L8.5 9 L8.5 1.8 Q8.5 0.5 9.8 0.5 Q11 0.5 11 1.8 L11 9 L11 2.5 Q11 1.2 12.3 1.2 Q13.5 1.2 13.5 2.5 L13.5 9.5 L13.5 4.5 Q13.5 3.3 14.8 3.3 Q16 3.3 16 4.5 L16 13 Q16 20 10 20 Q6.5 20 4.5 16.5 L1.5 11.5 Q1 10 2.3 9.5 Q3.5 9.2 4.5 10.5 Z" fill="#c4c4c4"/></svg>
<svg class="a" style="left:1784px;top:851px;" width="14" height="14" viewBox="0 0 14 14"><path d="M7 0.5 L7 13.5 M0.5 7 L13.5 7" stroke="#c4c4c4" stroke-width="2.4"/></svg>
<svg class="a" style="left:1784px;top:888px;" width="14" height="4" viewBox="0 0 14 4"><path d="M0.5 2 L13.5 2" stroke="#c4c4c4" stroke-width="2.4"/></svg>
<div class="t" style="left:1781px;top:921px;font-size:13.5px;color:#c4c4c4;font-weight:bold">1:1</div>
<svg class="a" style="left:1782px;top:945px;" width="18" height="16" viewBox="0 0 18 16"><rect x="0.8" y="0.8" width="16.4" height="14.4" fill="none" stroke="#c4c4c4" stroke-width="1.5"/><path d="M4 7 L4 4 L7 4 M14 9 L14 12 L11 12" stroke="#c4c4c4" stroke-width="1.5" fill="none"/></svg>
<div class="a" style="left:1036px;top:336px;width:329px;height:584px;background:#ffffff;"></div>
<svg class="a" style="left:1178px;top:355px;" width="46" height="54" viewBox="0 0 46 54"><path fill-rule="evenodd" fill="#2a6af6" d="M23 0.8 L45.3 14.4 Q45 36 23 52.8 Q1 36 0.7 14.4 Z M23 5.7 L40.9 17 Q40 34 23 47.9 Q6 34 5 17 Z"/><path fill-rule="evenodd" fill="#2a6af6" d="M9 19.4 L18.9 12.5 L23 19.4 L27 12.5 L36.9 19.4 Q36 33 23 42.7 Q10 33 9 19.4 Z M23 20.4 L27.3 28.4 L23 35.3 L18.6 28 Z"/></svg>
<svg class="a" style="left:1130px;top:427.5px;" width="43" height="22" viewBox="0 0 43 22"><g fill="none" stroke="#111111" stroke-width="2.0" stroke-linecap="square" stroke-linejoin="miter"><polyline points="3.50,4.25 10.25,2.75"/><polyline points="2.00,8.00 11.00,8.00"/><polyline points="6.50,3.50 6.50,20.00"/><polyline points="6.50,9.50 2.00,16.25"/><polyline points="7.25,11.00 10.25,14.00"/><polyline points="14.75,2.00 11.75,5.75"/><polyline points="13.25,4.25 19.25,4.25 12.50,11.00"/><polyline points="14.00,7.25 16.25,8.75"/><polyline points="15.50,11.00 11.75,14.75"/><polyline points="14.00,13.25 20.00,13.25 11.75,20.00"/><polyline points="14.75,16.25 17.00,17.75"/><polyline points="22.25,5.00 29.75,5.00"/><polyline points="21.50,9.50 30.50,9.50"/><polyline points="26.00,9.50 23.00,17.75 30.50,16.25"/><polyline points="28.25,14.00 30.50,17.75"/><polyline points="31.25,8.00 38.75,8.00 38.75,18.50 36.50,20.00"/><polyline points="35.00,2.00 35.00,9.50 31.25,20.00"/></g></svg>
<div class="t" style="left:1175px;top:439px;font-size:19px;color:#111111;font-weight:bold;letter-spacing:-0.8px">Guard</div>
<svg class="a" style="left:1230px;top:427.5px;" width="42" height="22" viewBox="0 0 42 22"><g fill="none" stroke="#111111" stroke-width="2.0" stroke-linecap="square" stroke-linejoin="miter"><polyline points="5.00,3.50 17.00,3.50"/><polyline points="2.00,9.50 20.00,9.50"/><polyline points="11.00,9.50 11.00,20.00 8.75,19.25"/><polyline points="6.50,13.25 3.50,18.50"/><polyline points="15.50,13.25 18.50,18.50"/><polyline points="24.75,2.00 21.00,10.25"/><polyline points="23.25,8.00 23.25,20.00"/><polyline points="26.25,3.50 33.00,3.50"/><polyline points="29.25,3.50 27.00,9.50"/><polyline points="27.75,8.00 32.25,8.00 27.00,17.75"/><polyline points="28.50,11.75 30.75,14.00"/><polyline points="34.50,5.75 34.50,15.50"/><polyline points="38.25,2.00 38.25,20.00 36.75,19.25"/></g></svg>
<div class="a" style="left:1056px;top:477px;width:290px;height:1px;background:#f4f4f4;"></div>
<svg class="a" style="left:1066px;top:555px;" width="12" height="11" viewBox="0 0 12 11"><rect x="0.6" y="0.6" width="10.8" height="9.8" fill="none" stroke="#c2c2c2" stroke-width="1.2"/><path d="M0.8 1.5 L6 6 L11.2 1.5" stroke="#c2c2c2" stroke-width="1.1" fill="none"/></svg>
<svg class="a" style="left:1083px;top:552.75px;" width="66" height="15" viewBox="0 0 66 15"><g fill="none" stroke="#8d8d8d" stroke-width="1.0" stroke-linecap="square" stroke-linejoin="miter"><polyline points="2.96,2.96 3.92,3.92"/><polyline points="2.00,5.83 3.92,5.83 3.92,11.58 5.35,10.62"/><polyline points="6.79,3.44 12.54,3.44"/><polyline points="9.67,2.00 9.67,6.31"/><polyline points="7.27,4.88 12.06,4.88"/><polyline points="6.31,6.31 13.02,6.31"/><polyline points="7.75,13.50 7.75,7.75 12.06,7.75 12.06,13.02 11.10,12.54"/><polyline points="7.75,9.67 12.06,9.67"/><polyline points="7.75,11.58 12.06,11.58"/><polyline points="14.50,3.92 19.29,3.92"/><polyline points="16.90,2.00 15.46,7.75 19.29,7.75"/><polyline points="17.18,4.88 17.18,13.50"/><polyline points="14.50,10.62 19.29,10.15"/><polyline points="19.77,5.83 22.65,2.00 26.00,5.83"/><polyline points="21.21,6.31 24.08,6.31"/><polyline points="20.25,13.50 20.25,7.75 22.65,7.75 22.65,12.54"/><polyline points="20.25,10.15 22.65,10.15"/><polyline points="24.08,7.75 24.08,11.58"/><polyline points="25.52,7.27 25.52,13.50 24.56,13.02"/><polyline points="30.83,2.96 32.75,4.40"/><polyline points="32.75,4.40 29.88,10.62 27.00,13.50"/><polyline points="32.75,5.35 35.62,10.62 38.50,13.50"/><polyline points="39.98,4.88 39.98,12.54"/><polyline points="39.98,4.88 46.21,4.88 46.21,12.54"/><polyline points="39.98,8.71 46.21,8.71"/><polyline points="39.98,12.54 46.21,12.54"/><polyline points="43.14,2.00 43.14,12.54"/><polyline points="47.65,13.50 47.65,2.48 50.04,2.48 49.08,6.31 50.52,8.71 48.60,10.15"/><polyline points="53.92,2.00 52.48,4.40"/><polyline points="53.44,2.96 56.79,2.96"/><polyline points="54.88,2.96 55.83,4.40"/><polyline points="59.67,2.00 58.23,4.40"/><polyline points="59.19,2.96 63.02,2.96"/><polyline points="60.62,2.96 61.58,4.40"/><polyline points="52.00,7.27 56.79,7.27"/><polyline points="54.40,5.35 54.40,13.50"/><polyline points="54.40,7.75 52.00,11.58"/><polyline points="54.88,8.71 56.79,10.62"/><polyline points="58.23,13.50 58.23,6.31 62.54,6.31 62.54,13.50"/><polyline points="58.23,8.71 62.54,8.71"/><polyline points="58.23,11.10 62.54,11.10"/><polyline points="58.23,13.50 62.54,13.50"/></g></svg>
<div class="a" style="left:1084px;top:570px;width:259px;height:2px;background:#c9c9c9;"></div>
<svg class="a" style="left:1067px;top:607px;" width="11" height="13" viewBox="0 0 11 13"><path d="M2.8 5.5 L2.8 3.5 A2.7 2.7 0 0 1 8.2 3.5 L8.2 5.5" stroke="#c2c2c2" stroke-width="1.2" fill="none"/><rect x="0.6" y="5.6" width="9.8" height="6.8" rx="0.8" fill="none" stroke="#c2c2c2" stroke-width="1.2"/><rect x="4.8" y="8.2" width="1.6" height="1.6" fill="#c2c2c2"/></svg>
<svg class="a" style="left:1083px;top:605.75px;" width="66" height="15" viewBox="0 0 66 15"><g fill="none" stroke="#8d8d8d" stroke-width="1.0" stroke-linecap="square" stroke-linejoin="miter"><polyline points="2.96,2.96 3.92,3.92"/><polyline points="2.00,5.83 3.92,5.83 3.92,11.58 5.35,10.62"/><polyline points="6.79,3.44 12.54,3.44"/><polyline points="9.67,2.00 9.67,6.31"/><polyline points="7.27,4.88 12.06,4.88"/><polyline points="6.31,6.31 13.02,6.31"/><polyline points="7.75,13.50 7.75,7.75 12.06,7.75 12.06,13.02 11.10,12.54"/><polyline points="7.75,9.67 12.06,9.67"/><polyline points="7.75,11.58 12.06,11.58"/><polyline points="14.50,3.92 19.29,3.92"/><polyline points="16.90,2.00 15.46,7.75 19.29,7.75"/><polyline points="17.18,4.88 17.18,13.50"/><polyline points="14.50,10.62 19.29,10.15"/><polyline points="19.77,5.83 22.65,2.00 26.00,5.83"/><polyline points="21.21,6.31 24.08,6.31"/><polyline points="20.25,13.50 20.25,7.75 22.65,7.75 22.65,12.54"/><polyline points="20.25,10.15 22.65,10.15"/><polyline points="24.08,7.75 24.08,11.58"/><polyline points="25.52,7.27 25.52,13.50 24.56,13.02"/><polyline points="30.83,2.96 32.75,4.40"/><polyline points="32.75,4.40 29.88,10.62 27.00,13.50"/><polyline points="32.75,5.35 35.62,10.62 38.50,13.50"/><polyline points="45.25,2.00 45.25,3.44"/><polyline points="40.46,5.35 40.46,3.92 50.04,3.92 50.04,5.35"/><polyline points="42.38,5.83 43.33,6.79"/><polyline points="44.29,5.35 44.29,8.71 47.17,8.71 48.12,7.75"/><polyline points="40.94,6.79 40.46,8.71"/><polyline points="49.08,6.31 50.04,8.23"/><polyline points="48.12,5.35 43.33,9.67"/><polyline points="40.94,10.15 40.94,13.02 49.56,13.02 49.56,10.15"/><polyline points="45.25,9.67 45.25,13.02"/><polyline points="52.00,2.96 56.79,2.96"/><polyline points="54.40,2.96 52.48,7.75"/><polyline points="53.44,12.54 53.44,6.79 56.31,6.79 56.31,12.54 53.44,12.54"/><polyline points="58.23,2.96 62.06,2.96 61.10,7.75"/><polyline points="58.71,2.96 58.23,7.75 63.02,7.75 62.54,13.02 61.10,12.54"/><polyline points="57.75,10.62 62.06,10.62"/></g></svg>
<div class="a" style="left:1084px;top:623px;width:259px;height:2px;background:#c9c9c9;"></div>
<div class="a" style="left:1056px;top:650px;width:290px;height:36px;background:#f3f4f6;border-radius:2px"></div>
<svg class="a" style="left:1068px;top:661px;" width="11" height="13" viewBox="0 0 11 13"><path d="M2.8 5.5 L2.8 3.5 A2.7 2.7 0 0 1 8.2 3.5 L8.2 5.5" stroke="#c2c2c2" stroke-width="1.2" fill="none"/><rect x="0.6" y="5.6" width="9.8" height="6.8" rx="0.8" fill="none" stroke="#c2c2c2" stroke-width="1.2"/><rect x="4.8" y="8.2" width="1.6" height="1.6" fill="#c2c2c2"/></svg>
<svg class="a" style="left:1084px;top:659.75px;" width="91" height="15" viewBox="0 0 91 15"><g fill="none" stroke="#8d8d8d" stroke-width="1.0" stroke-linecap="square" stroke-linejoin="miter"><polyline points="2.96,2.96 3.92,3.92"/><polyline points="2.00,5.83 3.92,5.83 3.92,11.58 5.35,10.62"/><polyline points="6.79,3.44 12.54,3.44"/><polyline points="9.67,2.00 9.67,6.31"/><polyline points="7.27,4.88 12.06,4.88"/><polyline points="6.31,6.31 13.02,6.31"/><polyline points="7.75,13.50 7.75,7.75 12.06,7.75 12.06,13.02 11.10,12.54"/><polyline points="7.75,9.67 12.06,9.67"/><polyline points="7.75,11.58 12.06,11.58"/><polyline points="14.50,2.96 26.00,2.96"/><polyline points="20.25,2.96 20.25,13.50"/><polyline points="15.94,13.50 15.94,5.35 24.56,5.35 24.56,13.50 23.60,13.02"/><polyline points="15.94,8.23 24.56,8.23"/><polyline points="14.50,10.62 26.00,10.62"/><polyline points="27.48,3.92 28.92,5.35"/><polyline points="27.48,11.58 29.40,8.71"/><polyline points="32.27,2.00 30.83,5.83"/><polyline points="31.79,3.92 37.54,3.92 36.58,6.31"/><polyline points="34.19,5.35 33.71,8.71 30.35,13.50"/><polyline points="34.19,8.23 38.50,13.50"/><polyline points="39.50,3.92 44.29,3.92"/><polyline points="41.90,2.00 40.46,7.75 44.29,7.75"/><polyline points="42.18,4.88 42.18,13.50"/><polyline points="39.50,10.62 44.29,10.15"/><polyline points="44.77,5.83 47.65,2.00 51.00,5.83"/><polyline points="46.21,6.31 49.08,6.31"/><polyline points="45.25,13.50 45.25,7.75 47.65,7.75 47.65,12.54"/><polyline points="45.25,10.15 47.65,10.15"/><polyline points="49.08,7.75 49.08,11.58"/><polyline points="50.52,7.27 50.52,13.50 49.56,13.02"/><polyline points="55.83,2.96 57.75,4.40"/><polyline points="57.75,4.40 54.88,10.62 52.00,13.50"/><polyline points="57.75,5.35 60.62,10.62 63.50,13.50"/><polyline points="70.25,2.00 70.25,3.44"/><polyline points="65.46,5.35 65.46,3.92 75.04,3.92 75.04,5.35"/><polyline points="67.38,5.83 68.33,6.79"/><polyline points="69.29,5.35 69.29,8.71 72.17,8.71 73.12,7.75"/><polyline points="65.94,6.79 65.46,8.71"/><polyline points="74.08,6.31 75.04,8.23"/><polyline points="73.12,5.35 68.33,9.67"/><polyline points="65.94,10.15 65.94,13.02 74.56,13.02 74.56,10.15"/><polyline points="70.25,9.67 70.25,13.02"/><polyline points="77.00,2.96 81.79,2.96"/><polyline points="79.40,2.96 77.48,7.75"/><polyline points="78.44,12.54 78.44,6.79 81.31,6.79 81.31,12.54 78.44,12.54"/><polyline points="83.23,2.96 87.06,2.96 86.10,7.75"/><polyline points="83.71,2.96 83.23,7.75 88.02,7.75 87.54,13.02 86.10,12.54"/><polyline points="82.75,10.62 87.06,10.62"/></g></svg>
<svg class="a" style="left:1067px;top:714px;" width="9" height="13" viewBox="0 0 9 13"><rect x="0.6" y="0.6" width="7.8" height="11.8" rx="1" fill="none" stroke="#c2c2c2" stroke-width="1.2"/><rect x="0.6" y="9.5" width="7.8" height="1" fill="#c2c2c2"/></svg>
<svg class="a" style="left:1083px;top:713.25px;" width="79" height="15" viewBox="0 0 79 15"><g fill="none" stroke="#8d8d8d" stroke-width="1.0" stroke-linecap="square" stroke-linejoin="miter"><polyline points="2.96,2.96 3.92,3.92"/><polyline points="2.00,5.83 3.92,5.83 3.92,11.58 5.35,10.62"/><polyline points="6.79,3.44 12.54,3.44"/><polyline points="9.67,2.00 9.67,6.31"/><polyline points="7.27,4.88 12.06,4.88"/><polyline points="6.31,6.31 13.02,6.31"/><polyline points="7.75,13.50 7.75,7.75 12.06,7.75 12.06,13.02 11.10,12.54"/><polyline points="7.75,9.67 12.06,9.67"/><polyline points="7.75,11.58 12.06,11.58"/><polyline points="14.50,3.92 19.29,3.92"/><polyline points="16.90,2.00 15.46,7.75 19.29,7.75"/><polyline points="17.18,4.88 17.18,13.50"/><polyline points="14.50,10.62 19.29,10.15"/><polyline points="19.77,5.83 22.65,2.00 26.00,5.83"/><polyline points="21.21,6.31 24.08,6.31"/><polyline points="20.25,13.50 20.25,7.75 22.65,7.75 22.65,12.54"/><polyline points="20.25,10.15 22.65,10.15"/><polyline points="24.08,7.75 24.08,11.58"/><polyline points="25.52,7.27 25.52,13.50 24.56,13.02"/><polyline points="30.83,2.96 32.75,4.40"/><polyline points="32.75,4.40 29.88,10.62 27.00,13.50"/><polyline points="32.75,5.35 35.62,10.62 38.50,13.50"/><polyline points="48.60,2.48 41.42,3.92"/><polyline points="40.94,5.83 49.56,5.83"/><polyline points="39.50,8.71 51.00,8.71"/><polyline points="45.25,3.92 45.25,13.02 43.81,12.54"/><polyline points="52.00,5.35 56.79,5.35"/><polyline points="54.40,2.00 54.40,13.50"/><polyline points="54.40,5.83 52.00,10.62"/><polyline points="54.88,6.79 56.79,8.71"/><polyline points="58.71,2.96 58.71,8.71 57.27,13.02"/><polyline points="58.71,2.96 61.58,2.96 61.58,12.06 63.50,12.06 63.50,10.62"/><polyline points="66.42,6.31 66.42,2.48 74.08,2.48 74.08,6.31 66.42,6.31"/><polyline points="64.50,8.23 76.00,8.23"/><polyline points="67.38,8.23 66.90,10.62 74.08,10.62 73.12,13.50 71.21,13.02"/></g></svg>
<div class="a" style="left:1084px;top:731px;width:259px;height:2px;background:#c9c9c9;"></div>
<svg class="a" style="left:1067px;top:768px;" width="11" height="13" viewBox="0 0 11 13"><path d="M2.8 5.5 L2.8 3.5 A2.7 2.7 0 0 1 8.2 3.5 L8.2 5.5" stroke="#c2c2c2" stroke-width="1.2" fill="none"/><rect x="0.6" y="5.6" width="9.8" height="6.8" rx="0.8" fill="none" stroke="#c2c2c2" stroke-width="1.2"/><rect x="4.8" y="8.2" width="1.6" height="1.6" fill="#c2c2c2"/></svg>
<svg class="a" style="left:1083px;top:766.75px;" width="66" height="15" viewBox="0 0 66 15"><g fill="none" stroke="#8d8d8d" stroke-width="1.0" stroke-linecap="square" stroke-linejoin="miter"><polyline points="2.96,2.96 3.92,3.92"/><polyline points="2.00,5.83 3.92,5.83 3.92,11.58 5.35,10.62"/><polyline points="6.79,3.44 12.54,3.44"/><polyline points="9.67,2.00 9.67,6.31"/><polyline points="7.27,4.88 12.06,4.88"/><polyline points="6.31,6.31 13.02,6.31"/><polyline points="7.75,13.50 7.75,7.75 12.06,7.75 12.06,13.02 11.10,12.54"/><polyline points="7.75,9.67 12.06,9.67"/><polyline points="7.75,11.58 12.06,11.58"/><polyline points="14.50,3.92 19.29,3.92"/><polyline points="16.90,2.00 15.46,7.75 19.29,7.75"/><polyline points="17.18,4.88 17.18,13.50"/><polyline points="14.50,10.62 19.29,10.15"/><polyline points="19.77,5.83 22.65,2.00 26.00,5.83"/><polyline points="21.21,6.31 24.08,6.31"/><polyline points="20.25,13.50 20.25,7.75 22.65,7.75 22.65,12.54"/><polyline points="20.25,10.15 22.65,10.15"/><polyline points="24.08,7.75 24.08,11.58"/><polyline points="25.52,7.27 25.52,13.50 24.56,13.02"/><polyline points="30.83,2.96 32.75,4.40"/><polyline points="32.75,4.40 29.88,10.62 27.00,13.50"/><polyline points="32.75,5.35 35.62,10.62 38.50,13.50"/><polyline points="45.25,2.00 45.25,3.44"/><polyline points="40.46,5.35 40.46,3.92 50.04,3.92 50.04,5.35"/><polyline points="42.38,5.83 43.33,6.79"/><polyline points="44.29,5.35 44.29,8.71 47.17,8.71 48.12,7.75"/><polyline points="40.94,6.79 40.46,8.71"/><polyline points="49.08,6.31 50.04,8.23"/><polyline points="48.12,5.35 43.33,9.67"/><polyline points="40.94,10.15 40.94,13.02 49.56,13.02 49.56,10.15"/><polyline points="45.25,9.67 45.25,13.02"/><polyline points="52.00,2.96 56.79,2.96"/><polyline points="54.40,2.96 52.48,7.75"/><polyline points="53.44,12.54 53.44,6.79 56.31,6.79 56.31,12.54 53.44,12.54"/><polyline points="58.23,2.96 62.06,2.96 61.10,7.75"/><polyline points="58.71,2.96 58.23,7.75 63.02,7.75 62.54,13.02 61.10,12.54"/><polyline points="57.75,10.62 62.06,10.62"/></g></svg>
<div class="a" style="left:1084px;top:784px;width:259px;height:2px;background:#c9c9c9;"></div>
<div class="a" style="left:1056px;top:811px;width:290px;height:36px;background:#f3f4f6;border-radius:2px"></div>
<svg class="a" style="left:1068px;top:822px;" width="11" height="13" viewBox="0 0 11 13"><path d="M2.8 5.5 L2.8 3.5 A2.7 2.7 0 0 1 8.2 3.5 L8.2 5.5" stroke="#c2c2c2" stroke-width="1.2" fill="none"/><rect x="0.6" y="5.6" width="9.8" height="6.8" rx="0.8" fill="none" stroke="#c2c2c2" stroke-width="1.2"/><rect x="4.8" y="8.2" width="1.6" height="1.6" fill="#c2c2c2"/></svg>
<svg class="a" style="left:1084px;top:820.75px;" width="91" height="15" viewBox="0 0 91 15"><g fill="none" stroke="#8d8d8d" stroke-width="1.0" stroke-linecap="square" stroke-linejoin="miter"><polyline points="2.96,2.96 3.92,3.92"/><polyline points="2.00,5.83 3.92,5.83 3.92,11.58 5.35,10.62"/><polyline points="6.79,3.44 12.54,3.44"/><polyline points="9.67,2.00 9.67,6.31"/><polyline points="7.27,4.88 12.06,4.88"/><polyline points="6.31,6.31 13.02,6.31"/><polyline points="7.75,13.50 7.75,7.75 12.06,7.75 12.06,13.02 11.10,12.54"/><polyline points="7.75,9.67 12.06,9.67"/><polyline points="7.75,11.58 12.06,11.58"/><polyline points="14.50,2.96 26.00,2.96"/><polyline points="20.25,2.96 20.25,13.50"/><polyline points="15.94,13.50 15.94,5.35 24.56,5.35 24.56,13.50 23.60,13.02"/><polyline points="15.94,8.23 24.56,8.23"/><polyline points="14.50,10.62 26.00,10.62"/><polyline points="27.48,3.92 28.92,5.35"/><polyline points="27.48,11.58 29.40,8.71"/><polyline points="32.27,2.00 30.83,5.83"/><polyline points="31.79,3.92 37.54,3.92 36.58,6.31"/><polyline points="34.19,5.35 33.71,8.71 30.35,13.50"/><polyline points="34.19,8.23 38.50,13.50"/><polyline points="39.50,3.92 44.29,3.92"/><polyline points="41.90,2.00 40.46,7.75 44.29,7.75"/><polyline points="42.18,4.88 42.18,13.50"/><polyline points="39.50,10.62 44.29,10.15"/><polyline points="44.77,5.83 47.65,2.00 51.00,5.83"/><polyline points="46.21,6.31 49.08,6.31"/><polyline points="45.25,13.50 45.25,7.75 47.65,7.75 47.65,12.54"/><polyline points="45.25,10.15 47.65,10.15"/><polyline points="49.08,7.75 49.08,11.58"/><polyline points="50.52,7.27 50.52,13.50 49.56,13.02"/><polyline points="55.83,2.96 57.75,4.40"/><polyline points="57.75,4.40 54.88,10.62 52.00,13.50"/><polyline points="57.75,5.35 60.62,10.62 63.50,13.50"/><polyline points="70.25,2.00 70.25,3.44"/><polyline points="65.46,5.35 65.46,3.92 75.04,3.92 75.04,5.35"/><polyline points="67.38,5.83 68.33,6.79"/><polyline points="69.29,5.35 69.29,8.71 72.17,8.71 73.12,7.75"/><polyline points="65.94,6.79 65.46,8.71"/><polyline points="74.08,6.31 75.04,8.23"/><polyline points="73.12,5.35 68.33,9.67"/><polyline points="65.94,10.15 65.94,13.02 74.56,13.02 74.56,10.15"/><polyline points="70.25,9.67 70.25,13.02"/><polyline points="77.00,2.96 81.79,2.96"/><polyline points="79.40,2.96 77.48,7.75"/><polyline points="78.44,12.54 78.44,6.79 81.31,6.79 81.31,12.54 78.44,12.54"/><polyline points="83.23,2.96 87.06,2.96 86.10,7.75"/><polyline points="83.71,2.96 83.23,7.75 88.02,7.75 87.54,13.02 86.10,12.54"/><polyline points="82.75,10.62 87.06,10.62"/></g></svg>
<svg class="a" style="left:1065px;top:872px;" width="12" height="14" viewBox="0 0 12 14"><path d="M6 0.7 L11.3 2.6 L11.3 6.5 Q11.3 10.8 6 13.3 Q0.7 10.8 0.7 6.5 L0.7 2.6 Z" fill="none" stroke="#c2c2c2" stroke-width="1.1"/><path d="M3.5 6.8 L5.4 8.7 L8.7 5" stroke="#c2c2c2" stroke-width="1.1" fill="none"/></svg>
<div class="a" style="left:1084px;top:888px;width:185px;height:2px;background:#c9c9c9;"></div>
<div class="a" style="left:1276px;top:866px;width:70px;height:33px;background:#eceef1;border:1.5px solid #6f9cf8;border-radius:3px"></div>
<svg class="a" style="left:1286px;top:876.35px;" width="51" height="13" viewBox="0 0 51 13"><g fill="none" stroke="#3a74f5" stroke-width="1.0" stroke-linecap="square" stroke-linejoin="miter"><polyline points="3.94,2.39 3.16,4.71"/><polyline points="2.00,5.10 11.30,5.10"/><polyline points="7.42,2.39 5.88,6.65 3.16,11.30"/><polyline points="8.59,2.39 9.75,3.55"/><polyline points="5.49,7.04 9.75,7.04 5.10,11.30"/><polyline points="7.04,8.20 11.30,11.30"/><polyline points="15.28,2.00 16.05,3.16"/><polyline points="18.76,2.00 17.99,3.16"/><polyline points="14.50,4.33 19.93,4.33"/><polyline points="14.11,6.26 20.31,6.26"/><polyline points="17.21,4.33 16.82,7.42 14.50,8.98"/><polyline points="17.21,7.04 19.93,8.98"/><polyline points="11.79,2.39 12.56,3.55"/><polyline points="11.40,5.49 12.95,5.49 12.95,8.98 11.40,10.53"/><polyline points="12.18,9.75 14.50,10.91 20.70,10.91"/><polyline points="21.19,2.77 23.90,2.77 23.51,6.26"/><polyline points="21.42,2.77 21.19,6.26 24.29,6.26 24.29,10.53 23.51,10.14"/><polyline points="20.80,8.59 23.90,8.20"/><polyline points="24.68,5.10 27.00,2.00 30.10,5.10"/><polyline points="25.84,5.88 28.55,5.88"/><polyline points="25.84,7.42 26.61,8.98"/><polyline points="27.78,7.04 28.16,8.98"/><polyline points="29.33,7.04 28.55,8.98"/><polyline points="25.06,10.53 30.10,10.53"/><polyline points="30.98,2.77 31.75,3.55"/><polyline points="30.20,5.10 31.75,5.10 31.75,9.75 32.91,8.98"/><polyline points="34.08,2.77 39.11,2.77"/><polyline points="36.40,2.77 36.40,10.91"/><polyline points="36.40,6.65 38.73,6.65"/><polyline points="34.46,5.88 34.46,10.91"/><polyline points="33.69,10.91 39.50,10.91"/><polyline points="39.60,2.77 43.48,2.77"/><polyline points="41.54,2.77 39.99,6.65"/><polyline points="40.76,10.53 40.76,5.88 43.09,5.88 43.09,10.53 40.76,10.53"/><polyline points="44.64,2.77 47.74,2.77 46.96,6.65"/><polyline points="45.02,2.77 44.64,6.65 48.51,6.65 48.12,10.91 46.96,10.53"/><polyline points="44.25,8.98 47.74,8.98"/></g></svg>
<div class="a" style="left:1423px;top:336px;width:330px;height:585px;background:#02606f;"></div>
<svg class="a" style="left:1423px;top:336px;" width="330" height="585" viewBox="0 0 330 585"><rect x="0.6" y="0.6" width="328.8" height="583.8" fill="none" stroke="#4ab8cc" stroke-width="1.2" stroke-dasharray="3 1.2"/></svg>
<svg class="a" style="left:1560px;top:354px;" width="57" height="57" viewBox="0 0 57 57"><rect x="0.6" y="0.6" width="55.8" height="55.8" fill="#0f7788" stroke="#4ab8cc" stroke-width="1.2" stroke-dasharray="3 1.2"/></svg>
<div class="t" style="left:1560px;top:382.5px;width:57px;text-align:center;font-size:7.5px;color:#62a2ae;letter-spacing:0.4px">app_logo</div>
<svg class="a" style="left:1518px;top:425px;" width="140" height="27" viewBox="0 0 140 27"><rect x="0.6" y="0.6" width="138.8" height="25.8" fill="#0f7788" stroke="#4ab8cc" stroke-width="1.2" stroke-dasharray="3 1.2"/></svg>
<div class="t" style="left:1518px;top:438.5px;width:140px;text-align:center;font-size:10px;color:#62a2ae;letter-spacing:0.4px">app_name</div>
<svg class="a" style="left:1442px;top:476px;" width="292" height="43" viewBox="0 0 292 43"><rect x="0.6" y="0.6" width="290.8" height="41.8" fill="#0f7788" stroke="#4ab8cc" stroke-width="1.2" stroke-dasharray="3 1.2"/></svg>
<div class="t" style="left:1442px;top:497.5px;width:292px;text-align:center;font-size:10px;color:#62a2ae;letter-spacing:0.4px">register_method_tab</div>
<svg class="a" style="left:1442px;top:543px;" width="292" height="51" viewBox="0 0 292 51"><rect x="0.6" y="0.6" width="290.8" height="49.8" fill="#0f7788" stroke="#4ab8cc" stroke-width="1.2" stroke-dasharray="3 1.2"/></svg>
<div class="t" style="left:1442px;top:568.5px;width:292px;text-align:center;font-size:10px;color:#62a2ae;letter-spacing:0.4px">email</div>
<svg class="a" style="left:1442px;top:597px;" width="292" height="50" viewBox="0 0 292 50"><rect x="0.6" y="0.6" width="290.8" height="48.8" fill="#0f7788" stroke="#4ab8cc" stroke-width="1.2" stroke-dasharray="3 1.2"/></svg>
<div class="t" style="left:1442px;top:622.0px;width:292px;text-align:center;font-size:10px;color:#62a2ae;letter-spacing:0.4px">password</div>
<svg class="a" style="left:1442px;top:649px;" width="292" height="53" viewBox="0 0 292 53"><rect x="0.6" y="0.6" width="290.8" height="51.8" fill="#0f7788" stroke="#4ab8cc" stroke-width="1.2" stroke-dasharray="3 1.2"/></svg>
<div class="t" style="left:1442px;top:675.5px;width:292px;text-align:center;font-size:10px;color:#62a2ae;letter-spacing:0.4px">password_confirm</div>
<svg class="a" style="left:1442px;top:705px;" width="292" height="51" viewBox="0 0 292 51"><rect x="0.6" y="0.6" width="290.8" height="49.8" fill="#0f7788" stroke="#4ab8cc" stroke-width="1.2" stroke-dasharray="3 1.2"/></svg>
<div class="t" style="left:1442px;top:730.5px;width:292px;text-align:center;font-size:10px;color:#62a2ae;letter-spacing:0.4px">phone_number</div>
<svg class="a" style="left:1442px;top:759px;" width="292" height="50" viewBox="0 0 292 50"><rect x="0.6" y="0.6" width="290.8" height="48.8" fill="#0f7788" stroke="#4ab8cc" stroke-width="1.2" stroke-dasharray="3 1.2"/></svg>
<div class="t" style="left:1442px;top:784.0px;width:292px;text-align:center;font-size:10px;color:#62a2ae;letter-spacing:0.4px">phone_password</div>
<svg class="a" style="left:1442px;top:811px;" width="292" height="52" viewBox="0 0 292 52"><rect x="0.6" y="0.6" width="290.8" height="50.8" fill="#0f7788" stroke="#4ab8cc" stroke-width="1.2" stroke-dasharray="3 1.2"/></svg>
<div class="t" style="left:1442px;top:837.0px;width:292px;text-align:center;font-size:10px;color:#62a2ae;letter-spacing:0.4px">phone_password_confirm</div>
<svg class="a" style="left:1442px;top:864px;" width="218" height="34" viewBox="0 0 218 34"><rect x="0.6" y="0.6" width="216.8" height="32.8" fill="#0f7788" stroke="#4ab8cc" stroke-width="1.2" stroke-dasharray="3 1.2"/></svg>
<div class="t" style="left:1442px;top:881.0px;width:218px;text-align:center;font-size:10px;color:#62a2ae;letter-spacing:0.4px">phone_verify_code</div>
<svg class="a" style="left:1662px;top:866px;" width="72" height="34" viewBox="0 0 72 34"><rect x="0.6" y="0.6" width="70.8" height="32.8" fill="#0f7788" stroke="#4ab8cc" stroke-width="1.2" stroke-dasharray="3 1.2"/></svg>
<div class="t" style="left:1662px;top:883.0px;width:72px;text-align:center;font-size:4.5px;color:#62a2ae;letter-spacing:0.4px">get_phone_verify_code</div>
<svg class="a" style="left:1442px;top:903px;" width="292" height="18" viewBox="0 0 292 18"><rect x="0" y="0" width="292" height="18" fill="#0f7788"/><path d="M0.6 18 L0.6 0.6 L291.4 0.6 L291.4 18" fill="none" stroke="#4ab8cc" stroke-width="1.2" stroke-dasharray="3 1.2"/></svg>
<div class="t" style="left:1442px;top:912px;width:292px;text-align:center;font-size:10px;color:#62a2ae;letter-spacing:0.4px">error_text</div>
<div class="a" style="left:1423px;top:920px;width:330px;height:1px;background:#4ab8cc;"></div>
<svg class="a" style="left:1442px;top:931px;" width="292" height="37" viewBox="0 0 292 37"><rect x="0.75" y="0.75" width="290.5" height="35.5" fill="none" stroke="#40aac0" stroke-width="1.6" stroke-dasharray="2 3"/></svg>
<svg class="a" style="left:1006px;top:83px;" width="19" height="17" viewBox="0 0 19 17"><path d="M1 5 L7 0.5 L10 3 L7.5 6.5 L18 15 L16 17 L5.5 8.5 L3.5 9 Z" fill="#22a35c"/></svg>
<div class="a" style="left:1036px;top:79px;width:1px;height:24px;background:#55585a;"></div>
<svg class="a" style="left:1061px;top:86px;" width="16" height="11" viewBox="0 0 16 11"><path d="M2.5 0.5 L4.5 3 M13.5 0.5 L11.5 3" stroke="#3ddc84" stroke-width="1.3"/><path d="M0 10.5 Q0 2.5 8 2.5 Q16 2.5 16 10.5 Z" fill="#3ddc84"/><circle cx="5" cy="7" r="0.9" fill="#3c3f41"/><circle cx="11" cy="7" r="0.9" fill="#3c3f41"/></svg>
<div class="t" style="left:1104px;top:91px;font-size:13.2px;color:#c4c4c4;">APP</div>
<svg class="a" style="left:1164px;top:88px;" width="11" height="7" viewBox="0 0 11 7"><path d="M0 0 L11 0 L5.5 6.5 Z" fill="#a9abad"/></svg>
<svg class="a" style="left:1209px;top:83px;" width="17" height="19" viewBox="0 0 17 19"><rect x="0.8" y="0.8" width="9.5" height="15.5" rx="1.5" fill="none" stroke="#9aa4b5" stroke-width="1.5"/><rect x="7.5" y="10" width="8.5" height="6" fill="#3c3f41" stroke="#a678c8" stroke-width="1.2"/><path d="M9 18.3 L15 18.3" stroke="#a678c8" stroke-width="1.2"/></svg>
<div class="t" style="left:1248px;top:91px;font-size:13.3px;color:#c4c4c4;">PIXEL 3 XL API 31</div>
<svg class="a" style="left:1390px;top:88px;" width="11" height="7" viewBox="0 0 11 7"><path d="M0 0 L11 0 L5.5 6.5 Z" fill="#a9abad"/></svg>
<svg class="a" style="left:1427px;top:84px;" width="13" height="14" viewBox="0 0 13 14"><path d="M0 0 L13 7 L0 14 Z" fill="#2aa55c"/></svg>
<svg class="a" style="left:1456px;top:82px;" width="17" height="18" viewBox="0 0 17 18"><path d="M13 7 A6 6 0 1 0 8 15" stroke="#8e9092" stroke-width="2" fill="none"/><path d="M10 2 L15 5.5 L10.5 9 Z" fill="#8e9092"/><path d="M9 17.5 L12 9.5 L15 17.5 M10 15 L14 15" stroke="#8e9092" stroke-width="1.3" fill="none"/></svg>
<svg class="a" style="left:1488px;top:85px;" width="19" height="15" viewBox="0 0 19 15"><rect x="0" y="0" width="14" height="2" fill="#8e9092"/><rect x="0" y="4" width="14" height="2" fill="#8e9092"/><rect x="0" y="8" width="10" height="2" fill="#8e9092"/><rect x="0" y="12" width="9" height="2" fill="#8e9092"/><path d="M12 9 L17 9 Q18.5 11 17 13.5 L13 13.5 M14 12 L12 13.5 L14 15" stroke="#8e9092" stroke-width="1.2" fill="none"/></svg>
<svg class="a" style="left:1520px;top:83px;" width="16" height="17" viewBox="0 0 16 17"><path d="M5 3 L4 0.5 M11 3 L12 0.5" stroke="#2aa55c" stroke-width="1.4"/><ellipse cx="8" cy="10" rx="5.5" ry="6.5" fill="#2aa55c"/><path d="M0 6.5 L2.5 7.5 M16 6.5 L13.5 7.5 M0 11 L2.5 11 M16 11 L13.5 11 M0.5 15.5 L3 14 M15.5 15.5 L13 14" stroke="#2aa55c" stroke-width="1.4"/><path d="M4.5 8 L11.5 8 M4.5 11.5 L11.5 11.5" stroke="#3c3f41" stroke-width="1.1"/></svg>
<svg class="a" style="left:1551px;top:84px;" width="19" height="18" viewBox="0 0 19 18"><path d="M1 2 L7 0 L13 2 L13 8 Q13 13 7 16 Q1 13 1 8 Z" fill="#8e9092"/><path d="M7 0 L7 16" stroke="#3c3f41" stroke-width="1"/><path d="M10 8 L19 13 L10 18 Z" fill="#8e9092" stroke="#3c3f41" stroke-width="1"/></svg>
<svg class="a" style="left:1582px;top:84px;" width="19" height="14" viewBox="0 0 19 14"><path d="M2 13 A8 8 0 0 1 17 13" stroke="#1e9bd7" stroke-width="2.6" fill="none"/><path d="M9.5 13 L13.5 5.5" stroke="#8e9092" stroke-width="2"/><path d="M14 3.5 A8 8 0 0 1 17.5 10" stroke="#8e9092" stroke-width="2.6" fill="none"/></svg>
<svg class="a" style="left:1615px;top:83px;" width="16" height="17" viewBox="0 0 16 17"><path d="M5 3 L4 0.5 M11 3 L12 0.5" stroke="#2aa55c" stroke-width="1.4"/><ellipse cx="8" cy="10" rx="5.5" ry="6.5" fill="#2aa55c"/><path d="M0 6.5 L2.5 7.5 M16 6.5 L13.5 7.5 M0 11 L2.5 11 M16 11 L13.5 11 M0.5 15.5 L3 14 M15.5 15.5 L13 14" stroke="#2aa55c" stroke-width="1.4"/><path d="M4.5 8 L11.5 8 M4.5 11.5 L11.5 11.5" stroke="#3c3f41" stroke-width="1.1"/></svg>
<svg class="a" style="left:1624px;top:91px;" width="10" height="10" viewBox="0 0 10 10"><path d="M1 9 L8 2 M3 2 L8 2 L8 7" stroke="#d4d6d8" stroke-width="1.8" fill="none"/></svg>
<div class="a" style="left:1648px;top:85px;width:13px;height:13px;background:#8c8c8c;"></div>
<div class="a" style="left:1674px;top:80px;width:1px;height:24px;background:#55585a;"></div>
<svg class="a" style="left:1685px;top:83px;" width="20" height="18" viewBox="0 0 20 18"><path d="M1 13 Q0 6 5 5 Q9 2 13 4 L15 2 L16.5 5 L14.5 7 Q15.5 9 15 12 L12.5 12 L12.5 10 L9 10 L8.5 12 L5.5 12 L5.5 10 L3 12.5 Z" fill="#8e9092"/><path d="M18.5 9 L12 16 M12 11 L12 16.5 L17 16.5" stroke="#1e9bd7" stroke-width="2" fill="none"/></svg>
<svg class="a" style="left:1720px;top:82px;" width="17" height="19" viewBox="0 0 17 19"><rect x="0.8" y="0.8" width="9" height="14" rx="1.5" fill="none" stroke="#d4d6d8" stroke-width="1.5"/><path d="M6.5 18.5 Q6.5 12.5 11.5 12.5 Q16.5 12.5 16.5 18.5 Z" fill="#3ddc84"/></svg>
<svg class="a" style="left:1749px;top:82px;" width="20" height="20" viewBox="0 0 20 20"><path d="M7.5 1 L14 4 L14 10 L7.5 13 L1 10 L1 4 Z" fill="#8e9092"/><path d="M1 4 L7.5 7 L14 4 M7.5 7 L7.5 13" stroke="#3c3f41" stroke-width="1.1" fill="none"/><path d="M14.5 8 L14.5 18 M11 14.5 L14.5 18.5 L18 14.5" stroke="#1e9bd7" stroke-width="2" fill="none"/></svg>
<div class="a" style="left:1778px;top:80px;width:1px;height:24px;background:#55585a;"></div>
<svg class="a" style="left:1789px;top:82px;" width="18" height="19" viewBox="0 0 18 19"><circle cx="7.5" cy="7.5" r="6" fill="none" stroke="#c4c4c4" stroke-width="2"/><path d="M12 12 L17 17.5" stroke="#c4c4c4" stroke-width="2.4"/></svg>
<svg class="a" style="left:1821px;top:83px;" width="17" height="17" viewBox="0 0 17 17"><circle cx="8.5" cy="8.5" r="5.5" fill="none" stroke="#c4c4c4" stroke-width="3.2"/><path d="M8.5 0 L8.5 17 M0 8.5 L17 8.5 M2.5 2.5 L14.5 14.5 M14.5 2.5 L2.5 14.5" stroke="#c4c4c4" stroke-width="2.6" stroke-dasharray="3 11"/></svg>
<svg class="a" style="left:1852px;top:81px;" width="20" height="21" viewBox="0 0 20 21"><rect x="0" y="0" width="20" height="21" fill="#d0d0d0"/><circle cx="10" cy="8" r="4" fill="#f4f4f4"/><path d="M2 21 Q2 13 10 13 Q18 13 18 21 Z" fill="#f4f4f4"/></svg>
</div>
</body></html>
